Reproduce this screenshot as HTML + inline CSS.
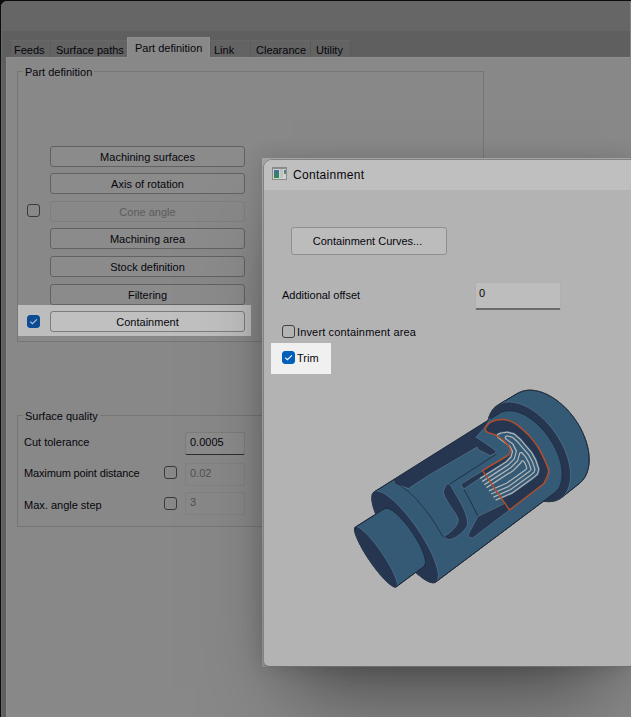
<!DOCTYPE html>
<html><head><meta charset="utf-8">
<style>
*{box-sizing:border-box;margin:0;padding:0}
html,body{width:631px;height:717px;overflow:hidden;background:#0c0c0c;font-family:"Liberation Sans",sans-serif;font-size:11px;color:#06060c}
.a{position:absolute}
.tab{top:40px;height:17px;background:#636363;border:1px solid #676767;border-bottom:none;border-left-color:#5b5b5b;border-right-color:#5b5b5b}
.tab.sel{top:37px;height:21px;background:#888;border-color:#8e8e8e}
.grp{border:1px solid #767676}
.gl{background:#888;padding:0 2px;white-space:nowrap;line-height:12px}
.btn{left:50px;width:195px;height:21px;border:1px solid #626262;border-radius:3px;background:#8b8b8b;text-align:center;line-height:20px;white-space:nowrap}
.cb{width:13px;height:13px;border:1px solid #3a3a3a;border-radius:3px}
.txt{white-space:nowrap;line-height:12px}
</style></head><body>
<!-- main window -->
<div class="a" style="left:1px;top:1px;width:630px;height:716px;background:#5f5f5f;border-top-left-radius:6px;overflow:hidden">
  <div class="a" style="left:0;top:0;width:630px;height:30px;background:#666"></div>
  <div class="a" style="left:0;top:0;width:1px;height:716px;background:#686868"></div>
  <div class="a" style="left:629px;top:0;width:1px;height:56px;background:#858585"></div>
</div>
<div class="a" style="left:6px;top:57px;width:625px;height:660px;background:#888;border-top:1px solid #8e8e8e;border-left:1px solid #8e8e8e"></div>
<!-- tabs -->
<div class="a tab" style="left:10px;width:41px"></div>
<div class="a tab" style="left:50px;width:78px"></div>
<div class="a tab" style="left:210px;width:41px"></div>
<div class="a tab" style="left:250px;width:61px"></div>
<div class="a tab" style="left:310px;width:41px"></div>
<div class="a tab sel" style="left:127px;width:83px"></div>
<div class="a txt" style="left:14px;top:44px">Feeds</div>
<div class="a txt" style="left:56px;top:44px">Surface paths</div>
<div class="a txt" style="left:135px;top:42px">Part definition</div>
<div class="a txt" style="left:214px;top:44px">Link</div>
<div class="a txt" style="left:256px;top:44px">Clearance</div>
<div class="a txt" style="left:316px;top:44px">Utility</div>

<!-- part definition group -->
<div class="a grp" style="left:17px;top:71px;width:467px;height:271px"></div>
<div class="a gl" style="left:23px;top:66px">Part definition</div>

<div class="a" style="left:18px;top:305px;width:233px;height:31px;background:#bdbdbd"></div>

<div class="a btn" style="top:146px">Machining surfaces</div>
<div class="a btn" style="top:173px">Axis of rotation</div>
<div class="a cb" style="left:27px;top:204px"></div>
<div class="a btn" style="top:201px;color:#5c5c5c;border-color:#7e7e7e;background:#888">Cone angle</div>
<div class="a btn" style="top:228px">Machining area</div>
<div class="a btn" style="top:256px">Stock definition</div>
<div class="a btn" style="top:284px">Filtering</div>
<div class="a cb" style="left:27px;top:315px;background:#0c4c94;border-color:#0c4c94"></div>
<svg class="a" style="left:27px;top:315px" width="13" height="13"><path d="M3.2,6.6 L5.4,8.7 L9.9,4.3" fill="none" stroke="#b9c3d2" stroke-width="1.1"/></svg>
<div class="a btn" style="top:311px;background:#c0c0c0;border-color:#7c7c7c">Containment</div>

<!-- surface quality -->
<div class="a grp" style="left:17px;top:415px;width:300px;height:112px"></div>
<div class="a gl" style="left:23px;top:410px">Surface quality</div>
<div class="a txt" style="left:24px;top:436px">Cut tolerance</div>
<div class="a txt" style="left:24px;top:467px;letter-spacing:-0.14px">Maximum point distance</div>
<div class="a txt" style="left:24px;top:499px">Max. angle step</div>
<div class="a" style="left:185px;top:432px;width:60px;height:23px;border:1px solid #7c7c7c;border-bottom:1px solid #2e2e2e;background:#8b8b8b;border-radius:2px"></div>
<div class="a txt" style="left:190px;top:436px">0.0005</div>
<div class="a cb" style="left:164px;top:466px"></div>
<div class="a" style="left:185px;top:463px;width:60px;height:23px;border:1px solid #818181;background:#888;border-radius:2px"></div>
<div class="a txt" style="left:190px;top:467px;color:#505050">0.02</div>
<div class="a cb" style="left:164px;top:497px"></div>
<div class="a" style="left:185px;top:492px;width:60px;height:23px;border:1px solid #818181;background:#888;border-radius:2px"></div>
<div class="a txt" style="left:190px;top:496px;color:#505050">3</div>

<!-- dialog -->
<div class="a" style="left:262px;top:158px;width:369px;height:509px;background:linear-gradient(#a4a4a4,#9a9a9a 40%,#8a8a8a);box-shadow:0 0 20px rgba(0,0,0,0.15),0 50px 80px -30px rgba(0,0,0,0.5)"></div>
<div class="a" style="left:263px;top:159px;width:368px;height:508px;background:#b3b3b3;border:1px solid #828282;border-bottom-color:#6e6e6e;border-right:none;border-top-left-radius:9px;border-bottom-left-radius:6px;overflow:hidden">
  <div class="a" style="left:0;top:0;width:368px;height:30px;background:#bfbfbf"></div>
</div>
<!-- dialog icon -->
<div class="a" style="left:272px;top:167px;width:15px;height:13px;border:1px solid #8a8a8a;border-top-width:2px;background:#d2d2d2"></div>
<div class="a" style="left:274px;top:170px;width:5px;height:8px;background:linear-gradient(#41709e,#2f8c4e)"></div>
<div class="a" style="left:280px;top:169px;width:3px;height:9px;background:#c2c2c2"></div>
<div class="a" style="left:284px;top:170px;width:2px;height:4px;background:linear-gradient(#4a78b0,#5a9a50)"></div>
<div class="a txt" style="left:293px;top:169px;font-size:12px;letter-spacing:0.3px">Containment</div>
<div class="a" style="left:291px;top:227px;width:156px;height:28px;border:1px solid #8f8f8f;border-radius:3px;background:#bcbcbc;text-align:center;line-height:27px;white-space:nowrap;padding-right:3px">Containment Curves...</div>
<div class="a txt" style="left:282px;top:289px">Additional offset</div>
<div class="a" style="left:475px;top:282px;width:86px;height:28px;background:#bdbdbd;border:1px solid #b0b0b0;border-bottom:2px solid #6a6a6a;border-radius:2px"></div>
<div class="a txt" style="left:479px;top:287px">0</div>
<div class="a cb" style="left:282px;top:325px;border-color:#404040"></div>
<div class="a txt" style="left:297px;top:326px;letter-spacing:0.15px">Invert containment area</div>
<div class="a" style="left:271px;top:343px;width:60px;height:31px;background:#f0f0f0"></div>
<div class="a cb" style="left:282px;top:351px;background:#005fb8;border-color:#005fb8"></div>
<svg class="a" style="left:282px;top:351px" width="13" height="13"><path d="M3.2,6.6 L5.4,8.7 L9.9,4.3" fill="none" stroke="#ffffff" stroke-width="1.1"/></svg>
<div class="a txt" style="left:297px;top:352px">Trim</div>
<svg class="a" style="left:0;top:0" width="631" height="717" viewBox="0 0 631 717">
<path d="M579.5,483.4 L561.8,497.4 L561.6,497.6 L561.3,497.7 L561.1,497.9 L560.9,498.1 L560.6,498.2 L560.4,498.4 L560.1,498.5 L559.9,498.7 L559.7,498.8 L559.4,499.0 L559.2,499.1 L558.9,499.2 L558.7,499.4 L558.4,499.5 L558.2,499.6 L557.9,499.7 L557.6,499.9 L557.4,500.0 L557.1,500.1 L556.8,500.2 L556.6,500.3 L556.3,500.4 L556.0,500.5 L555.8,500.6 L555.5,500.6 L555.2,500.7 L554.9,500.8 L554.7,500.9 L554.4,500.9 L554.1,501.0 L553.8,501.1 L553.5,501.1 L553.2,501.2 L552.9,501.2 L552.7,501.3 L552.4,501.3 L552.1,501.4 L551.8,501.4 L551.5,501.4 L551.2,501.5 L550.9,501.5 L550.6,501.5 L550.3,501.5 L550.0,501.6 L549.7,501.6 L549.4,501.6 L549.1,501.6 L548.8,501.6 L548.4,501.6 L548.1,501.6 L547.8,501.6 L547.5,501.6 L547.2,501.5 L546.9,501.5 L546.6,501.5 L546.3,501.5 L545.9,501.4 L545.6,501.4 L545.3,501.4 L545.0,501.3 L544.7,501.3 L544.3,501.2 L544.0,501.2 L543.7,501.1 L543.4,501.1 L543.1,501.0 L542.7,501.0 L542.4,500.9 L542.1,500.8 L541.8,500.8 L541.4,500.7 L541.1,500.6 L540.8,500.5 L540.4,500.4 L540.1,500.3 L539.8,500.2 L539.5,500.2 L539.1,500.1 L538.8,500.0 L538.5,499.8 L538.1,499.7 L537.8,499.6 L537.5,499.5 L537.1,499.4 L536.8,499.3 L536.5,499.1 L536.1,499.0 L535.8,498.9 L535.5,498.8 L535.1,498.6 L534.8,498.5 L534.5,498.3 L534.1,498.2 L533.8,498.0 L533.5,497.9 L533.1,497.7 L532.8,497.6 L532.5,497.4 L532.1,497.3 L531.8,497.1 L531.5,496.9 L531.1,496.8 L530.8,496.6 L530.5,496.4 L530.1,496.2 L529.8,496.1 L529.5,495.9 L529.1,495.7 L528.8,495.5 L528.5,495.3 L528.1,495.1 L527.8,494.9 L527.5,494.7 L527.1,494.5 L526.8,494.3 L526.5,494.1 L526.1,493.9 L525.8,493.7 L525.5,493.4 L525.1,493.2 L524.8,493.0 L524.5,492.8 L524.2,492.6 L523.8,492.3 L523.5,492.1 L523.2,491.9 L522.9,491.6 L522.5,491.4 L522.2,491.1 L521.9,490.9 L521.6,490.7 L521.2,490.4 L520.9,490.2 L520.6,489.9 L520.3,489.7 L519.9,489.4 L519.6,489.1 L519.3,488.9 L519.0,488.6 L518.7,488.4 L518.4,488.1 L518.0,487.8 L517.7,487.5 L517.4,487.3 L517.1,487.0 L516.8,486.7 L516.5,486.4 L516.2,486.2 L515.9,485.9 L515.5,485.6 L515.2,485.3 L514.9,485.0 L514.6,484.7 L514.3,484.4 L514.0,484.1 L513.7,483.8 L513.4,483.5 L513.1,483.2 L512.8,482.9 L512.5,482.6 L512.2,482.3 L511.9,482.0 L511.6,481.7 L511.3,481.4 L511.0,481.1 L510.7,480.7 L510.4,480.4 L510.2,480.1 L509.9,479.8 L509.6,479.5 L509.3,479.1 L509.0,478.8 L508.7,478.5 L508.4,478.2 L508.2,477.8 L507.9,477.5 L507.6,477.2 L507.3,476.8 L507.1,476.5 L506.8,476.2 L506.5,475.8 L506.2,475.5 L506.0,475.1 L505.7,474.8 L505.4,474.5 L505.2,474.1 L504.9,473.8 L504.6,473.4 L504.4,473.1 L504.1,472.7 L503.9,472.4 L503.6,472.0 L503.3,471.7 L503.1,471.3 L502.8,470.9 L502.6,470.6 L502.3,470.2 L502.1,469.9 L501.8,469.5 L501.6,469.1 L501.4,468.8 L501.1,468.4 L500.9,468.0 L500.6,467.7 L500.4,467.3 L500.2,466.9 L499.9,466.6 L499.7,466.2 L499.5,465.8 L499.3,465.5 L499.0,465.1 L498.8,464.7 L498.6,464.3 L498.4,464.0 L498.1,463.6 L497.9,463.2 L497.7,462.8 L497.5,462.4 L497.3,462.1 L497.1,461.7 L496.9,461.3 L496.7,460.9 L496.5,460.5 L496.3,460.2 L496.1,459.8 L495.9,459.4 L495.7,459.0 L495.5,458.6 L495.3,458.2 L495.1,457.9 L494.9,457.5 L494.7,457.1 L494.6,456.7 L494.4,456.3 L494.2,455.9 L494.0,455.5 L493.8,455.1 L493.7,454.8 L493.5,454.4 L493.3,454.0 L493.2,453.6 L493.0,453.2 L492.8,452.8 L492.7,452.4 L492.5,452.0 L492.4,451.6 L492.2,451.2 L492.1,450.9 L491.9,450.5 L491.8,450.1 L491.6,449.7 L491.5,449.3 L491.3,448.9 L491.2,448.5 L491.1,448.1 L490.9,447.7 L490.8,447.3 L490.7,446.9 L490.6,446.5 L490.4,446.2 L490.3,445.8 L490.2,445.4 L490.1,445.0 L490.0,444.6 L489.9,444.2 L489.7,443.8 L489.6,443.4 L489.5,443.0 L489.4,442.7 L489.3,442.3 L489.2,441.9 L489.1,441.5 L489.0,441.1 L489.0,440.7 L488.9,440.3 L488.8,439.9 L488.7,439.6 L488.6,439.2 L488.5,438.8 L488.5,438.4 L488.4,438.0 L488.3,437.6 L488.3,437.3 L488.2,436.9 L488.1,436.5 L488.1,436.1 L488.0,435.7 L488.0,435.4 L487.9,435.0 L487.9,434.6 L487.8,434.2 L487.8,433.9 L487.7,433.5 L487.7,433.1 L487.7,432.8 L487.6,432.4 L487.6,432.0 L487.6,431.6 L487.5,431.3 L487.5,430.9 L487.5,430.5 L487.5,430.2 L487.5,429.8 L487.5,429.5 L487.5,429.1 L487.4,428.7 L487.4,428.4 L487.4,428.0 L487.4,427.7 L487.4,427.3 L487.5,427.0 L487.5,426.6 L487.5,426.3 L487.5,425.9 L487.5,425.6 L487.5,425.2 L487.6,424.9 L487.6,424.5 L487.6,424.2 L487.7,423.9 L487.7,423.5 L487.7,423.2 L487.8,422.8 L487.8,422.5 L487.9,422.2 L487.9,421.9 L488.0,421.5 L488.0,421.2 L488.1,420.9 L488.1,420.6 L488.2,420.2 L488.3,419.9 L488.3,419.6 L488.4,419.3 L488.5,419.0 L488.6,418.7 L488.6,418.4 L488.7,418.0 L488.8,417.7 L488.9,417.4 L489.0,417.1 L489.1,416.8 L489.2,416.5 L489.3,416.3 L489.4,416.0 L489.5,415.7 L489.6,415.4 L489.7,415.1 L489.8,414.8 L490.0,414.5 L490.1,414.3 L490.2,414.0 L490.3,413.7 L490.5,413.4 L490.6,413.2 L490.7,412.9 L490.9,412.6 L491.0,412.4 L491.2,412.1 L491.3,411.9 L491.5,411.6 L491.6,411.4 L491.8,411.1 L491.9,410.9 L492.1,410.6 L492.3,410.4 L492.4,410.2 L492.6,409.9 L492.8,409.7 L492.9,409.5 L493.1,409.3 L493.3,409.0 L493.5,408.8 L493.7,408.6 L493.9,408.4 L494.1,408.2 L494.3,408.0 L494.5,407.8 L494.7,407.6 L494.9,407.4 L495.1,407.2 L495.3,407.0 L495.5,406.8 L495.7,406.6 L495.9,406.4 L496.2,406.3 L496.4,406.1 L496.6,405.9 L496.8,405.7 L497.1,405.6 L497.3,405.4 L497.5,405.3 L497.8,405.1 L498.0,405.0 L498.3,404.8 L517.6,393.3 L517.9,393.2 L518.2,393.0 L518.4,392.9 L518.7,392.8 L519.0,392.6 L519.2,392.5 L519.5,392.4 L519.8,392.2 L520.1,392.1 L520.4,392.0 L520.6,391.9 L520.9,391.8 L521.2,391.7 L521.5,391.6 L521.8,391.5 L522.1,391.4 L522.4,391.3 L522.7,391.2 L523.0,391.1 L523.3,391.0 L523.6,390.9 L523.9,390.9 L524.2,390.8 L524.6,390.7 L524.9,390.7 L525.2,390.6 L525.5,390.5 L525.8,390.5 L526.2,390.4 L526.5,390.4 L526.8,390.4 L527.2,390.3 L527.5,390.3 L527.8,390.3 L528.2,390.2 L528.5,390.2 L528.8,390.2 L529.2,390.2 L529.5,390.2 L529.9,390.2 L530.2,390.2 L530.6,390.2 L530.9,390.2 L531.3,390.2 L531.6,390.2 L532.0,390.3 L532.4,390.3 L532.7,390.3 L533.1,390.4 L533.4,390.4 L533.8,390.4 L534.2,390.5 L534.5,390.5 L534.9,390.6 L535.3,390.7 L535.6,390.7 L536.0,390.8 L536.4,390.9 L536.8,390.9 L537.1,391.0 L537.5,391.1 L537.9,391.2 L538.3,391.3 L538.7,391.4 L539.0,391.5 L539.4,391.6 L539.8,391.7 L540.2,391.8 L540.6,391.9 L541.0,392.1 L541.4,392.2 L541.8,392.3 L542.1,392.5 L542.5,392.6 L542.9,392.7 L543.3,392.9 L543.7,393.1 L544.1,393.2 L544.5,393.4 L544.9,393.5 L545.3,393.7 L545.7,393.9 L546.1,394.1 L546.5,394.2 L546.9,394.4 L547.3,394.6 L547.7,394.8 L548.1,395.0 L548.5,395.2 L548.9,395.4 L549.3,395.6 L549.7,395.9 L550.1,396.1 L550.5,396.3 L550.9,396.5 L551.2,396.8 L551.6,397.0 L552.0,397.2 L552.4,397.5 L552.8,397.7 L553.2,398.0 L553.6,398.2 L554.0,398.5 L554.4,398.8 L554.8,399.0 L555.2,399.3 L555.6,399.6 L556.0,399.9 L556.4,400.1 L556.8,400.4 L557.2,400.7 L557.6,401.0 L558.0,401.3 L558.4,401.6 L558.7,401.9 L559.1,402.2 L559.5,402.5 L559.9,402.9 L560.3,403.2 L560.7,403.5 L561.1,403.8 L561.4,404.2 L561.8,404.5 L562.2,404.8 L562.6,405.2 L562.9,405.5 L563.3,405.9 L563.7,406.2 L564.1,406.6 L564.4,406.9 L564.8,407.3 L565.2,407.6 L565.5,408.0 L565.9,408.4 L566.3,408.7 L566.6,409.1 L567.0,409.5 L567.4,409.9 L567.7,410.3 L568.1,410.6 L568.4,411.0 L568.8,411.4 L569.1,411.8 L569.5,412.2 L569.8,412.6 L570.2,413.0 L570.5,413.4 L570.8,413.8 L571.2,414.2 L571.5,414.6 L571.8,415.1 L572.2,415.5 L572.5,415.9 L572.8,416.3 L573.1,416.7 L573.5,417.2 L573.8,417.6 L574.1,418.0 L574.4,418.5 L574.7,418.9 L575.0,419.3 L575.3,419.8 L575.6,420.2 L575.9,420.6 L576.2,421.1 L576.5,421.5 L576.8,422.0 L577.1,422.4 L577.4,422.9 L577.7,423.3 L577.9,423.8 L578.2,424.2 L578.5,424.7 L578.8,425.2 L579.0,425.6 L579.3,426.1 L579.6,426.5 L579.8,427.0 L580.1,427.5 L580.3,427.9 L580.6,428.4 L580.8,428.9 L581.1,429.3 L581.3,429.8 L581.5,430.3 L581.8,430.7 L582.0,431.2 L582.2,431.7 L582.4,432.1 L582.7,432.6 L582.9,433.1 L583.1,433.6 L583.3,434.0 L583.5,434.5 L583.7,435.0 L583.9,435.4 L584.1,435.9 L584.3,436.4 L584.5,436.9 L584.7,437.3 L584.9,437.8 L585.0,438.3 L585.2,438.8 L585.4,439.2 L585.5,439.7 L585.7,440.2 L585.9,440.7 L586.0,441.1 L586.2,441.6 L586.3,442.1 L586.5,442.6 L586.6,443.0 L586.7,443.5 L586.9,444.0 L587.0,444.4 L587.1,444.9 L587.3,445.4 L587.4,445.8 L587.5,446.3 L587.6,446.8 L587.7,447.2 L587.8,447.7 L587.9,448.2 L588.0,448.6 L588.1,449.1 L588.2,449.5 L588.3,450.0 L588.4,450.5 L588.4,450.9 L588.5,451.4 L588.6,451.8 L588.6,452.3 L588.7,452.7 L588.8,453.2 L588.8,453.6 L588.9,454.1 L588.9,454.5 L589.0,455.0 L589.0,455.4 L589.0,455.8 L589.1,456.3 L589.1,456.7 L589.1,457.1 L589.1,457.6 L589.1,458.0 L589.2,458.4 L589.2,458.8 L589.2,459.3 L589.2,459.7 L589.2,460.1 L589.2,460.5 L589.2,460.9 L589.1,461.4 L589.1,461.8 L589.1,462.2 L589.1,462.6 L589.1,463.0 L589.0,463.4 L589.0,463.8 L588.9,464.2 L588.9,464.6 L588.9,465.0 L588.8,465.3 L588.8,465.7 L588.7,466.1 L588.6,466.5 L588.6,466.9 L588.5,467.2 L588.4,467.6 L588.4,468.0 L588.3,468.4 L588.2,468.7 L588.1,469.1 L588.0,469.4 L587.9,469.8 L587.8,470.1 L587.7,470.5 L587.6,470.8 L587.5,471.2 L587.4,471.5 L587.3,471.9 L587.2,472.2 L587.1,472.5 L587.0,472.9 L586.8,473.2 L586.7,473.5 L586.6,473.8 L586.4,474.1 L586.3,474.4 L586.2,474.8 L586.0,475.1 L585.9,475.4 L585.7,475.7 L585.6,476.0 L585.4,476.2 L585.3,476.5 L585.1,476.8 L584.9,477.1 L584.8,477.4 L584.6,477.7 L584.4,477.9 L584.2,478.2 L584.1,478.5 L583.9,478.7 L583.7,479.0 L583.5,479.2 L583.3,479.5 L583.1,479.7 L582.9,480.0 L582.7,480.2 L582.5,480.5 L582.3,480.7 L582.1,480.9 L581.9,481.2 L581.7,481.4 L581.5,481.6 L581.3,481.8 L581.1,482.0 L580.8,482.2 L580.6,482.4 L580.4,482.6 L580.2,482.8 L579.9,483.0 L579.7,483.2Z" fill="#345a76" stroke="#1c2636" stroke-width="0.8" stroke-linejoin="round"/>
<path d="M569.1,463.3 L569.2,463.7 L569.3,464.2 L569.4,464.7 L569.5,465.1 L569.6,465.6 L569.7,466.0 L569.8,466.5 L569.8,466.9 L569.9,467.4 L570.0,467.8 L570.0,468.3 L570.1,468.7 L570.1,469.2 L570.2,469.6 L570.2,470.1 L570.3,470.5 L570.3,471.0 L570.4,471.4 L570.4,471.8 L570.4,472.3 L570.5,472.7 L570.5,473.1 L570.5,473.5 L570.5,474.0 L570.5,474.4 L570.5,474.8 L570.5,475.2 L570.5,475.6 L570.5,476.0 L570.5,476.4 L570.5,476.9 L570.5,477.3 L570.5,477.7 L570.5,478.1 L570.4,478.5 L570.4,478.8 L570.4,479.2 L570.3,479.6 L570.3,480.0 L570.3,480.4 L570.2,480.8 L570.2,481.1 L570.1,481.5 L570.1,481.9 L570.0,482.3 L569.9,482.6 L569.9,483.0 L569.8,483.3 L569.7,483.7 L569.6,484.1 L569.6,484.4 L569.5,484.8 L569.4,485.1 L569.3,485.4 L569.2,485.8 L569.1,486.1 L569.0,486.4 L568.9,486.8 L568.8,487.1 L568.7,487.4 L568.6,487.7 L568.4,488.0 L568.3,488.4 L568.2,488.7 L568.1,489.0 L567.9,489.3 L567.8,489.6 L567.7,489.9 L567.5,490.1 L567.4,490.4 L567.2,490.7 L567.1,491.0 L566.9,491.3 L566.8,491.5 L566.6,491.8 L566.5,492.1 L566.3,492.3 L566.1,492.6 L566.0,492.9 L565.8,493.1 L565.6,493.4 L565.4,493.6 L565.3,493.8 L565.1,494.1 L564.9,494.3 L564.7,494.6 L564.5,494.8 L564.3,495.0 L564.1,495.2 L563.9,495.4 L563.7,495.6 L563.5,495.9 L563.3,496.1 L563.1,496.3 L562.9,496.5 L562.7,496.7 L562.4,496.8 L562.2,497.0 L562.0,497.2 L561.8,497.4 L561.6,497.6 L561.3,497.7 L561.1,497.9 L560.9,498.1 L560.6,498.2 L560.4,498.4 L560.1,498.5 L559.9,498.7 L559.7,498.8 L559.4,499.0 L559.2,499.1 L558.9,499.2 L558.7,499.4 L558.4,499.5 L558.2,499.6 L557.9,499.7 L557.6,499.9 L557.4,500.0 L557.1,500.1 L556.8,500.2 L556.6,500.3 L556.3,500.4 L556.0,500.5 L555.8,500.6 L555.5,500.6 L555.2,500.7 L554.9,500.8 L554.7,500.9 L554.4,500.9 L554.1,501.0 L553.8,501.1 L553.5,501.1 L553.2,501.2 L552.9,501.2 L552.7,501.3 L552.4,501.3 L552.1,501.4 L551.8,501.4 L551.5,501.4 L551.2,501.5 L550.9,501.5 L550.6,501.5 L550.3,501.5 L550.0,501.6 L549.7,501.6 L549.4,501.6 L549.1,501.6 L548.8,501.6 L548.4,501.6 L548.1,501.6 L547.8,501.6 L547.5,501.6 L547.2,501.5 L546.9,501.5 L546.6,501.5 L546.3,501.5 L545.9,501.4 L545.6,501.4 L545.3,501.4 L545.0,501.3 L544.7,501.3 L544.3,501.2 L544.0,501.2 L543.7,501.1 L543.4,501.1 L543.1,501.0 L542.7,501.0 L542.4,500.9 L542.1,500.8 L541.8,500.8 L541.4,500.7 L541.1,500.6 L540.8,500.5 L540.4,500.4 L540.1,500.3 L539.8,500.2 L539.5,500.2 L539.1,500.1 L538.8,500.0 L538.5,499.8 L538.1,499.7 L537.8,499.6 L537.5,499.5 L537.1,499.4 L536.8,499.3 L536.5,499.1 L536.1,499.0 L535.8,498.9 L535.5,498.8 L535.1,498.6 L534.8,498.5 L534.5,498.3 L534.1,498.2 L533.8,498.0 L533.5,497.9 L533.1,497.7 L532.8,497.6 L532.5,497.4 L532.1,497.3 L531.8,497.1 L531.5,496.9 L531.1,496.8 L530.8,496.6 L530.5,496.4 L530.1,496.2 L529.8,496.1 L529.5,495.9 L529.1,495.7 L528.8,495.5 L528.5,495.3 L528.1,495.1 L527.8,494.9 L527.5,494.7 L527.1,494.5 L526.8,494.3 L526.5,494.1 L526.1,493.9 L525.8,493.7 L525.5,493.4 L525.1,493.2 L524.8,493.0 L524.5,492.8 L524.2,492.6 L523.8,492.3 L523.5,492.1 L523.2,491.9 L522.9,491.6 L522.5,491.4 L522.2,491.1 L521.9,490.9 L521.6,490.7 L521.2,490.4 L520.9,490.2 L520.6,489.9 L520.3,489.7 L519.9,489.4 L519.6,489.1 L519.3,488.9 L519.0,488.6 L518.7,488.4 L518.4,488.1 L518.0,487.8 L517.7,487.5 L517.4,487.3 L517.1,487.0 L516.8,486.7 L516.5,486.4 L516.2,486.2 L515.9,485.9 L515.5,485.6 L515.2,485.3 L514.9,485.0 L514.6,484.7 L514.3,484.4 L514.0,484.1 L513.7,483.8 L513.4,483.5 L513.1,483.2 L512.8,482.9 L512.5,482.6 L512.2,482.3 L511.9,482.0 L511.6,481.7 L511.3,481.4 L511.0,481.1 L510.7,480.7 L510.4,480.4 L510.2,480.1 L509.9,479.8 L509.6,479.5 L509.3,479.1 L509.0,478.8 L508.7,478.5 L508.4,478.2 L508.2,477.8 L507.9,477.5 L507.6,477.2 L507.3,476.8 L507.1,476.5 L506.8,476.2 L506.5,475.8 L506.2,475.5 L506.0,475.1 L505.7,474.8 L505.4,474.5 L505.2,474.1 L504.9,473.8 L504.6,473.4 L504.4,473.1 L504.1,472.7 L503.9,472.4 L503.6,472.0 L503.3,471.7 L503.1,471.3 L502.8,470.9 L502.6,470.6 L502.3,470.2 L502.1,469.9 L501.8,469.5 L501.6,469.1 L501.4,468.8 L501.1,468.4 L500.9,468.0 L500.6,467.7 L500.4,467.3 L500.2,466.9 L499.9,466.6 L499.7,466.2 L499.5,465.8 L499.3,465.5 L499.0,465.1 L498.8,464.7 L498.6,464.3 L498.4,464.0 L498.1,463.6 L497.9,463.2 L497.7,462.8 L497.5,462.4 L497.3,462.1 L497.1,461.7 L496.9,461.3 L496.7,460.9 L496.5,460.5 L496.3,460.2 L496.1,459.8 L495.9,459.4 L495.7,459.0 L495.5,458.6 L495.3,458.2 L495.1,457.9 L494.9,457.5 L494.7,457.1 L494.6,456.7 L494.4,456.3 L494.2,455.9 L494.0,455.5 L493.8,455.1 L493.7,454.8 L493.5,454.4 L493.3,454.0 L493.2,453.6 L493.0,453.2 L492.8,452.8 L492.7,452.4 L492.5,452.0 L492.4,451.6 L492.2,451.2 L492.1,450.9 L491.9,450.5 L491.8,450.1 L491.6,449.7 L491.5,449.3 L491.3,448.9 L491.2,448.5 L491.1,448.1 L490.9,447.7 L490.8,447.3 L490.7,446.9 L490.6,446.5 L490.4,446.2 L490.3,445.8 L490.2,445.4 L490.1,445.0 L490.0,444.6 L489.9,444.2 L489.7,443.8 L489.6,443.4 L489.5,443.0 L489.4,442.7 L489.3,442.3 L489.2,441.9 L489.1,441.5 L489.0,441.1 L489.0,440.7 L488.9,440.3 L488.8,439.9 L488.7,439.6 L488.6,439.2 L488.5,438.8 L488.5,438.4 L488.4,438.0 L488.3,437.6 L488.3,437.3 L488.2,436.9 L488.1,436.5 L488.1,436.1 L488.0,435.7 L488.0,435.4 L487.9,435.0 L487.9,434.6 L487.8,434.2 L487.8,433.9 L487.7,433.5 L487.7,433.1 L487.7,432.8 L487.6,432.4 L487.6,432.0 L487.6,431.6 L487.5,431.3 L487.5,430.9 L487.5,430.5 L487.5,430.2 L487.5,429.8 L487.5,429.5 L487.5,429.1 L487.4,428.7 L487.4,428.4 L487.4,428.0 L487.4,427.7 L487.4,427.3 L487.5,427.0 L487.5,426.6 L487.5,426.3 L487.5,425.9 L487.5,425.6 L487.5,425.2 L487.6,424.9 L487.6,424.5 L487.6,424.2 L487.7,423.9 L487.7,423.5 L487.7,423.2 L487.8,422.8 L487.8,422.5 L487.9,422.2 L487.9,421.9 L488.0,421.5 L488.0,421.2 L488.1,420.9 L488.1,420.6 L488.2,420.2 L488.3,419.9 L488.3,419.6 L488.4,419.3 L488.5,419.0 L488.6,418.7 L488.6,418.4 L488.7,418.0 L488.8,417.7 L488.9,417.4 L489.0,417.1 L489.1,416.8 L489.2,416.5 L489.3,416.3 L489.4,416.0 L489.5,415.7 L489.6,415.4 L489.7,415.1 L489.8,414.8 L490.0,414.5 L490.1,414.3 L490.2,414.0 L490.3,413.7 L490.5,413.4 L490.6,413.2 L490.7,412.9 L490.9,412.6 L491.0,412.4 L491.2,412.1 L491.3,411.9 L491.5,411.6 L491.6,411.4 L491.8,411.1 L491.9,410.9 L492.1,410.6 L492.3,410.4 L492.4,410.2 L492.6,409.9 L492.8,409.7 L492.9,409.5 L493.1,409.3 L493.3,409.0 L493.5,408.8 L493.7,408.6 L493.9,408.4 L494.1,408.2 L494.3,408.0 L494.5,407.8 L494.7,407.6 L494.9,407.4 L495.1,407.2 L495.3,407.0 L495.5,406.8 L495.7,406.6 L495.9,406.4 L496.2,406.3 L496.4,406.1 L496.6,405.9 L496.8,405.7 L497.1,405.6 L497.3,405.4 L497.5,405.3 L497.8,405.1 L498.0,405.0 L498.3,404.8 L498.5,404.7 L498.8,404.5 L499.0,404.4 L499.3,404.3 L499.5,404.1 L499.8,404.0 L500.1,403.9 L500.3,403.8 L500.6,403.7 L500.9,403.5 L501.1,403.4 L501.4,403.3 L501.7,403.2 L502.0,403.1 L502.3,403.0 L502.5,403.0 L502.8,402.9 L503.1,402.8 L503.4,402.7 L503.7,402.6 L504.0,402.6 L504.3,402.5 L504.6,402.4 L504.9,402.4 L505.2,402.3 L505.5,402.3 L505.8,402.2 L506.2,402.2 L506.5,402.2 L506.8,402.1 L507.1,402.1 L507.4,402.1 L507.8,402.1 L508.1,402.0 L508.4,402.0 L508.7,402.0 L509.1,402.0 L509.4,402.0 L509.7,402.0 L510.1,402.0 L510.4,402.0 L510.8,402.1 L511.1,402.1 L511.5,402.1 L511.8,402.1 L512.2,402.2 L512.5,402.2 L512.9,402.2 L513.2,402.3 L513.6,402.3 L513.9,402.4 L514.3,402.5 L514.6,402.5 L515.0,402.6 L515.4,402.7 L515.7,402.7 L516.1,402.8 L516.5,402.9 L516.8,403.0 L517.2,403.1 L517.6,403.2 L518.0,403.3 L518.3,403.4 L518.7,403.5 L519.1,403.6 L519.5,403.7 L519.8,403.9 L520.2,404.0 L520.6,404.1 L521.0,404.3 L521.4,404.4 L521.8,404.6 L522.2,404.7 L522.5,404.9 L522.9,405.0 L523.3,405.2 L523.7,405.3 L524.1,405.5 L524.5,405.7 L524.9,405.9 L525.3,406.1 L525.7,406.2 L526.1,406.4 L526.5,406.6 L526.8,406.8 L527.2,407.0 L527.6,407.3 L528.0,407.5 L528.4,407.7 L528.8,407.9 L529.2,408.1 L529.6,408.4 L530.0,408.6 L530.4,408.8 L530.8,409.1 L531.2,409.3 L531.6,409.6 L532.0,409.8 L532.4,410.1 L532.8,410.4 L533.2,410.6 L533.6,410.9 L534.0,411.2 L534.4,411.4 L534.8,411.7 L535.2,412.0 L535.6,412.3 L536.0,412.6 L536.4,412.9 L536.8,413.2 L537.2,413.5 L537.6,413.8 L537.9,414.1 L538.3,414.4 L538.7,414.8 L539.1,415.1 L539.5,415.4 L539.9,415.7 L540.3,416.1 L540.7,416.4 L541.1,416.8 L541.4,417.1 L541.8,417.5 L542.2,417.8 L542.6,418.2 L543.0,418.5 L543.4,418.9 L543.7,419.2 L544.1,419.6 L544.5,420.0 L544.9,420.4 L545.2,420.7 L545.6,421.1 L546.0,421.5 L546.3,421.9 L546.7,422.3 L547.1,422.7 L547.4,423.1 L547.8,423.5 L548.2,423.9 L548.5,424.3 L548.9,424.7 L549.2,425.1 L549.6,425.5 L549.9,425.9 L550.3,426.3 L550.6,426.7 L551.0,427.2 L551.3,427.6 L551.7,428.0 L552.0,428.4 L552.3,428.9 L552.7,429.3 L553.0,429.7 L553.3,430.2 L553.7,430.6 L554.0,431.1 L554.3,431.5 L554.6,432.0 L555.0,432.4 L555.3,432.9 L555.6,433.3 L555.9,433.8 L556.2,434.2 L556.5,434.7 L556.8,435.1 L557.1,435.6 L557.4,436.1 L557.7,436.5 L558.0,437.0 L558.3,437.4 L558.6,437.9 L558.9,438.4 L559.2,438.9 L559.4,439.3 L559.7,439.8 L560.0,440.3 L560.2,440.7 L560.5,441.2 L560.8,441.7 L561.0,442.2 L561.3,442.6 L561.5,443.1 L561.8,443.6 L562.0,444.1 L562.3,444.6 L562.5,445.0 L562.8,445.5 L563.0,446.0 L563.2,446.5 L563.5,447.0 L563.7,447.5 L563.9,447.9 L564.1,448.4 L564.3,448.9 L564.6,449.4 L564.8,449.9 L565.0,450.4 L565.2,450.8 L565.4,451.3 L565.6,451.8 L565.7,452.3 L565.9,452.8 L566.1,453.3 L566.3,453.8 L566.5,454.2 L566.6,454.7 L566.8,455.2 L567.0,455.7 L567.1,456.2 L567.3,456.6 L567.5,457.1 L567.6,457.6 L567.7,458.1 L567.9,458.6 L568.0,459.0 L568.2,459.5 L568.3,460.0 L568.4,460.5 L568.6,460.9 L568.7,461.4 L568.8,461.9 L568.9,462.3 L569.0,462.8Z" fill="#263650" stroke="#6a8498" stroke-width="0.6" stroke-linejoin="round"/>
<path d="M554.4,493.1 L436.1,581.8 L436.0,581.9 L435.9,582.0 L435.8,582.0 L435.6,582.1 L435.5,582.2 L435.4,582.2 L435.3,582.3 L435.2,582.3 L435.1,582.4 L434.9,582.4 L434.8,582.5 L434.7,582.5 L434.5,582.5 L434.4,582.6 L434.3,582.6 L434.1,582.6 L434.0,582.6 L433.9,582.7 L433.7,582.7 L433.6,582.7 L433.4,582.7 L433.3,582.7 L433.1,582.7 L433.0,582.7 L432.8,582.7 L432.7,582.7 L432.5,582.7 L432.3,582.6 L432.2,582.6 L432.0,582.6 L431.8,582.6 L431.7,582.6 L431.5,582.5 L431.3,582.5 L431.2,582.4 L431.0,582.4 L430.8,582.4 L430.6,582.3 L430.4,582.3 L430.3,582.2 L430.1,582.1 L429.9,582.1 L429.7,582.0 L429.5,581.9 L429.3,581.9 L429.1,581.8 L428.9,581.7 L428.8,581.6 L428.6,581.6 L428.4,581.5 L428.2,581.4 L428.0,581.3 L427.8,581.2 L427.6,581.1 L427.4,581.0 L427.1,580.9 L426.9,580.8 L426.7,580.7 L426.5,580.5 L426.3,580.4 L426.1,580.3 L425.9,580.2 L425.7,580.1 L425.5,579.9 L425.2,579.8 L425.0,579.7 L424.8,579.5 L424.6,579.4 L424.4,579.3 L424.1,579.1 L423.9,579.0 L423.7,578.8 L423.5,578.7 L423.2,578.5 L423.0,578.3 L422.8,578.2 L422.5,578.0 L422.3,577.8 L422.1,577.7 L421.8,577.5 L421.6,577.3 L421.4,577.2 L421.1,577.0 L420.9,576.8 L420.7,576.6 L420.4,576.4 L420.2,576.2 L419.9,576.0 L419.7,575.8 L419.4,575.6 L419.2,575.4 L419.0,575.2 L418.7,575.0 L418.5,574.8 L418.2,574.6 L418.0,574.4 L417.7,574.2 L417.5,574.0 L417.2,573.8 L417.0,573.5 L416.7,573.3 L416.5,573.1 L416.2,572.9 L416.0,572.6 L415.7,572.4 L415.5,572.2 L415.2,571.9 L415.0,571.7 L414.7,571.5 L414.5,571.2 L414.2,571.0 L413.9,570.7 L413.7,570.5 L413.4,570.2 L413.2,570.0 L412.9,569.7 L412.7,569.5 L412.4,569.2 L412.1,569.0 L411.9,568.7 L411.6,568.4 L411.4,568.2 L411.1,567.9 L410.9,567.6 L410.6,567.4 L410.3,567.1 L410.1,566.8 L409.8,566.5 L409.6,566.3 L409.3,566.0 L409.0,565.7 L408.8,565.4 L408.5,565.1 L408.2,564.8 L408.0,564.5 L407.7,564.3 L407.5,564.0 L407.2,563.7 L406.9,563.4 L406.7,563.1 L406.4,562.8 L406.2,562.5 L405.9,562.2 L405.6,561.9 L405.4,561.6 L405.1,561.3 L404.8,561.0 L404.6,560.7 L404.3,560.4 L404.1,560.0 L403.8,559.7 L403.5,559.4 L403.3,559.1 L403.0,558.8 L402.8,558.5 L402.5,558.2 L402.2,557.8 L402.0,557.5 L401.7,557.2 L401.5,556.9 L401.2,556.6 L400.9,556.2 L400.7,555.9 L400.4,555.6 L400.2,555.2 L399.9,554.9 L399.7,554.6 L399.4,554.3 L399.1,553.9 L398.9,553.6 L398.6,553.3 L398.4,552.9 L398.1,552.6 L397.9,552.3 L397.6,551.9 L397.4,551.6 L397.1,551.2 L396.9,550.9 L396.6,550.6 L396.4,550.2 L396.1,549.9 L395.9,549.5 L395.6,549.2 L395.4,548.8 L395.1,548.5 L394.9,548.1 L394.6,547.8 L394.4,547.5 L394.1,547.1 L393.9,546.8 L393.7,546.4 L393.4,546.1 L393.2,545.7 L392.9,545.4 L392.7,545.0 L392.4,544.6 L392.2,544.3 L392.0,543.9 L391.7,543.6 L391.5,543.2 L391.3,542.9 L391.0,542.5 L390.8,542.2 L390.6,541.8 L390.3,541.5 L390.1,541.1 L389.9,540.8 L389.6,540.4 L389.4,540.0 L389.2,539.7 L388.9,539.3 L388.7,539.0 L388.5,538.6 L388.3,538.3 L388.0,537.9 L387.8,537.5 L387.6,537.2 L387.4,536.8 L387.2,536.5 L386.9,536.1 L386.7,535.7 L386.5,535.4 L386.3,535.0 L386.1,534.7 L385.9,534.3 L385.7,534.0 L385.5,533.6 L385.2,533.2 L385.0,532.9 L384.8,532.5 L384.6,532.2 L384.4,531.8 L384.2,531.5 L384.0,531.1 L383.8,530.7 L383.6,530.4 L383.4,530.0 L383.2,529.7 L383.0,529.3 L382.8,529.0 L382.6,528.6 L382.4,528.3 L382.3,527.9 L382.1,527.5 L381.9,527.2 L381.7,526.8 L381.5,526.5 L381.3,526.1 L381.1,525.8 L381.0,525.4 L380.8,525.1 L380.6,524.7 L380.4,524.4 L380.2,524.0 L380.1,523.7 L379.9,523.3 L379.7,523.0 L379.6,522.7 L379.4,522.3 L379.2,522.0 L379.1,521.6 L378.9,521.3 L378.7,520.9 L378.6,520.6 L378.4,520.3 L378.3,519.9 L378.1,519.6 L378.0,519.2 L377.8,518.9 L377.7,518.6 L377.5,518.2 L377.4,517.9 L377.2,517.6 L377.1,517.2 L376.9,516.9 L376.8,516.6 L376.7,516.3 L376.5,515.9 L376.4,515.6 L376.3,515.3 L376.1,515.0 L376.0,514.6 L375.9,514.3 L375.7,514.0 L375.6,513.7 L375.5,513.4 L375.4,513.1 L375.3,512.7 L375.1,512.4 L375.0,512.1 L374.9,511.8 L374.8,511.5 L374.7,511.2 L374.6,510.9 L374.5,510.6 L374.4,510.3 L374.3,510.0 L374.2,509.7 L374.1,509.4 L374.0,509.1 L373.9,508.8 L373.8,508.5 L373.7,508.2 L373.6,507.9 L373.5,507.6 L373.4,507.3 L373.4,507.1 L373.3,506.8 L373.2,506.5 L373.1,506.2 L373.1,505.9 L373.0,505.7 L372.9,505.4 L372.9,505.1 L372.8,504.8 L372.7,504.6 L372.7,504.3 L372.6,504.1 L372.6,503.8 L372.5,503.5 L372.4,503.3 L372.4,503.0 L372.4,502.8 L372.3,502.5 L372.3,502.3 L372.2,502.0 L372.2,501.8 L372.1,501.5 L372.1,501.3 L372.1,501.1 L372.1,500.8 L372.0,500.6 L372.0,500.4 L372.0,500.1 L372.0,499.9 L371.9,499.7 L371.9,499.4 L371.9,499.2 L371.9,499.0 L371.9,498.8 L371.9,498.6 L371.9,498.4 L371.9,498.2 L371.9,498.0 L371.9,497.8 L371.9,497.6 L371.9,497.4 L371.9,497.2 L371.9,497.0 L371.9,496.8 L371.9,496.6 L372.0,496.4 L372.0,496.2 L372.0,496.1 L372.0,495.9 L372.1,495.7 L372.1,495.6 L372.1,495.4 L372.2,495.2 L372.2,495.1 L372.3,494.9 L372.3,494.8 L372.3,494.6 L372.4,494.5 L372.4,494.3 L372.5,494.2 L372.6,494.0 L372.6,493.9 L372.7,493.8 L372.7,493.6 L372.8,493.5 L372.9,493.4 L372.9,493.3 L373.0,493.1 L373.1,493.0 L373.2,492.9 L373.2,492.8 L373.3,492.7 L373.4,492.6 L373.5,492.5 L373.6,492.4 L373.7,492.3 L373.8,492.2 L373.9,492.1 L374.0,492.1 L374.1,492.0 L374.2,491.9 L374.3,491.8 L499.4,413.3 L499.7,413.2 L499.9,413.1 L500.1,413.0 L500.3,412.8 L500.5,412.7 L500.7,412.6 L500.9,412.5 L501.2,412.4 L501.4,412.3 L501.6,412.2 L501.8,412.1 L502.1,412.0 L502.3,411.9 L502.5,411.8 L502.8,411.7 L503.0,411.6 L503.3,411.6 L503.5,411.5 L503.7,411.4 L504.0,411.3 L504.2,411.3 L504.5,411.2 L504.7,411.2 L505.0,411.1 L505.3,411.0 L505.5,411.0 L505.8,411.0 L506.0,410.9 L506.3,410.9 L506.6,410.8 L506.8,410.8 L507.1,410.8 L507.4,410.8 L507.7,410.7 L507.9,410.7 L508.2,410.7 L508.5,410.7 L508.8,410.7 L509.0,410.7 L509.3,410.7 L509.6,410.7 L509.9,410.7 L510.2,410.7 L510.5,410.7 L510.8,410.7 L511.1,410.8 L511.4,410.8 L511.7,410.8 L512.0,410.8 L512.3,410.9 L512.6,410.9 L512.9,411.0 L513.2,411.0 L513.5,411.1 L513.8,411.1 L514.1,411.2 L514.4,411.2 L514.7,411.3 L515.0,411.4 L515.3,411.4 L515.6,411.5 L516.0,411.6 L516.3,411.7 L516.6,411.8 L516.9,411.8 L517.2,411.9 L517.5,412.0 L517.9,412.1 L518.2,412.2 L518.5,412.4 L518.8,412.5 L519.2,412.6 L519.5,412.7 L519.8,412.8 L520.1,412.9 L520.5,413.1 L520.8,413.2 L521.1,413.3 L521.5,413.5 L521.8,413.6 L522.1,413.8 L522.4,413.9 L522.8,414.1 L523.1,414.2 L523.4,414.4 L523.8,414.6 L524.1,414.7 L524.5,414.9 L524.8,415.1 L525.1,415.3 L525.5,415.5 L525.8,415.6 L526.1,415.8 L526.5,416.0 L526.8,416.2 L527.1,416.4 L527.5,416.6 L527.8,416.8 L528.2,417.1 L528.5,417.3 L528.8,417.5 L529.2,417.7 L529.5,417.9 L529.8,418.2 L530.2,418.4 L530.5,418.6 L530.8,418.9 L531.2,419.1 L531.5,419.3 L531.9,419.6 L532.2,419.8 L532.5,420.1 L532.9,420.4 L533.2,420.6 L533.5,420.9 L533.9,421.1 L534.2,421.4 L534.5,421.7 L534.9,422.0 L535.2,422.2 L535.5,422.5 L535.8,422.8 L536.2,423.1 L536.5,423.4 L536.8,423.7 L537.2,424.0 L537.5,424.3 L537.8,424.6 L538.1,424.9 L538.5,425.2 L538.8,425.5 L539.1,425.8 L539.4,426.1 L539.7,426.4 L540.1,426.7 L540.4,427.1 L540.7,427.4 L541.0,427.7 L541.3,428.1 L541.6,428.4 L541.9,428.7 L542.2,429.1 L542.5,429.4 L542.8,429.7 L543.2,430.1 L543.5,430.4 L543.8,430.8 L544.1,431.1 L544.4,431.5 L544.6,431.8 L544.9,432.2 L545.2,432.6 L545.5,432.9 L545.8,433.3 L546.1,433.6 L546.4,434.0 L546.7,434.4 L547.0,434.7 L547.2,435.1 L547.5,435.5 L547.8,435.9 L548.1,436.2 L548.3,436.6 L548.6,437.0 L548.9,437.4 L549.1,437.8 L549.4,438.2 L549.7,438.5 L549.9,438.9 L550.2,439.3 L550.4,439.7 L550.7,440.1 L550.9,440.5 L551.2,440.9 L551.4,441.3 L551.7,441.7 L551.9,442.1 L552.2,442.5 L552.4,442.9 L552.6,443.3 L552.9,443.7 L553.1,444.1 L553.3,444.5 L553.6,444.9 L553.8,445.3 L554.0,445.7 L554.2,446.1 L554.4,446.5 L554.6,446.9 L554.8,447.3 L555.1,447.7 L555.3,448.1 L555.5,448.5 L555.7,449.0 L555.8,449.4 L556.0,449.8 L556.2,450.2 L556.4,450.6 L556.6,451.0 L556.8,451.4 L557.0,451.8 L557.1,452.2 L557.3,452.6 L557.5,453.1 L557.6,453.5 L557.8,453.9 L558.0,454.3 L558.1,454.7 L558.3,455.1 L558.4,455.5 L558.6,455.9 L558.7,456.3 L558.9,456.7 L559.0,457.2 L559.2,457.6 L559.3,458.0 L559.4,458.4 L559.5,458.8 L559.7,459.2 L559.8,459.6 L559.9,460.0 L560.0,460.4 L560.1,460.8 L560.3,461.2 L560.4,461.6 L560.5,462.0 L560.6,462.4 L560.7,462.8 L560.8,463.2 L560.8,463.6 L560.9,464.0 L561.0,464.4 L561.1,464.8 L561.2,465.2 L561.3,465.6 L561.3,465.9 L561.4,466.3 L561.5,466.7 L561.5,467.1 L561.6,467.5 L561.6,467.9 L561.7,468.3 L561.7,468.6 L561.8,469.0 L561.8,469.4 L561.9,469.8 L561.9,470.1 L561.9,470.5 L562.0,470.9 L562.0,471.2 L562.0,471.6 L562.0,472.0 L562.1,472.3 L562.1,472.7 L562.1,473.0 L562.1,473.4 L562.1,473.8 L562.1,474.1 L562.1,474.5 L562.1,474.8 L562.1,475.2 L562.1,475.5 L562.1,475.8 L562.1,476.2 L562.0,476.5 L562.0,476.9 L562.0,477.2 L562.0,477.5 L561.9,477.8 L561.9,478.2 L561.9,478.5 L561.8,478.8 L561.8,479.1 L561.7,479.4 L561.7,479.8 L561.6,480.1 L561.6,480.4 L561.5,480.7 L561.5,481.0 L561.4,481.3 L561.3,481.6 L561.3,481.9 L561.2,482.2 L561.1,482.5 L561.0,482.8 L561.0,483.1 L560.9,483.3 L560.8,483.6 L560.7,483.9 L560.6,484.2 L560.5,484.4 L560.4,484.7 L560.3,485.0 L560.2,485.2 L560.1,485.5 L560.0,485.8 L559.9,486.0 L559.8,486.3 L559.7,486.5 L559.5,486.8 L559.4,487.0 L559.3,487.3 L559.2,487.5 L559.0,487.7 L558.9,488.0 L558.8,488.2 L558.6,488.4 L558.5,488.6 L558.3,488.9 L558.2,489.1 L558.1,489.3 L557.9,489.5 L557.8,489.7 L557.6,489.9 L557.4,490.1 L557.3,490.3 L557.1,490.5 L557.0,490.7 L556.8,490.9 L556.6,491.1 L556.5,491.3 L556.3,491.4 L556.1,491.6 L555.9,491.8 L555.8,492.0 L555.6,492.1 L555.4,492.3 L555.2,492.5 L555.0,492.6 L554.8,492.8 L554.6,492.9Z" fill="#345a76" stroke="#1c2636" stroke-width="0.8" stroke-linejoin="round"/>
<path d="M432.7,555.7 L432.9,556.1 L433.0,556.5 L433.2,556.9 L433.4,557.3 L433.5,557.7 L433.7,558.1 L433.9,558.5 L434.0,558.9 L434.2,559.3 L434.3,559.6 L434.5,560.0 L434.6,560.4 L434.7,560.8 L434.9,561.1 L435.0,561.5 L435.2,561.9 L435.3,562.2 L435.4,562.6 L435.5,563.0 L435.7,563.3 L435.8,563.7 L435.9,564.0 L436.0,564.4 L436.1,564.7 L436.2,565.0 L436.3,565.4 L436.4,565.7 L436.5,566.1 L436.6,566.4 L436.7,566.7 L436.8,567.0 L436.9,567.4 L437.0,567.7 L437.1,568.0 L437.2,568.3 L437.2,568.6 L437.3,568.9 L437.4,569.2 L437.5,569.5 L437.5,569.8 L437.6,570.1 L437.6,570.4 L437.7,570.7 L437.8,571.0 L437.8,571.3 L437.9,571.6 L437.9,571.8 L437.9,572.1 L438.0,572.4 L438.0,572.6 L438.0,572.9 L438.1,573.2 L438.1,573.4 L438.1,573.7 L438.2,573.9 L438.2,574.2 L438.2,574.4 L438.2,574.7 L438.2,574.9 L438.2,575.1 L438.2,575.4 L438.2,575.6 L438.2,575.8 L438.2,576.0 L438.2,576.2 L438.2,576.4 L438.2,576.7 L438.2,576.9 L438.2,577.1 L438.2,577.3 L438.1,577.5 L438.1,577.6 L438.1,577.8 L438.1,578.0 L438.0,578.2 L438.0,578.4 L438.0,578.6 L437.9,578.7 L437.9,578.9 L437.8,579.1 L437.8,579.2 L437.7,579.4 L437.7,579.5 L437.6,579.7 L437.6,579.8 L437.5,580.0 L437.4,580.1 L437.4,580.2 L437.3,580.4 L437.2,580.5 L437.2,580.6 L437.1,580.7 L437.0,580.8 L436.9,581.0 L436.8,581.1 L436.7,581.2 L436.7,581.3 L436.6,581.4 L436.5,581.5 L436.4,581.6 L436.3,581.6 L436.2,581.7 L436.1,581.8 L436.0,581.9 L435.9,582.0 L435.8,582.0 L435.6,582.1 L435.5,582.2 L435.4,582.2 L435.3,582.3 L435.2,582.3 L435.1,582.4 L434.9,582.4 L434.8,582.5 L434.7,582.5 L434.5,582.5 L434.4,582.6 L434.3,582.6 L434.1,582.6 L434.0,582.6 L433.9,582.7 L433.7,582.7 L433.6,582.7 L433.4,582.7 L433.3,582.7 L433.1,582.7 L433.0,582.7 L432.8,582.7 L432.7,582.7 L432.5,582.7 L432.3,582.6 L432.2,582.6 L432.0,582.6 L431.8,582.6 L431.7,582.6 L431.5,582.5 L431.3,582.5 L431.2,582.4 L431.0,582.4 L430.8,582.4 L430.6,582.3 L430.4,582.3 L430.3,582.2 L430.1,582.1 L429.9,582.1 L429.7,582.0 L429.5,581.9 L429.3,581.9 L429.1,581.8 L428.9,581.7 L428.8,581.6 L428.6,581.6 L428.4,581.5 L428.2,581.4 L428.0,581.3 L427.8,581.2 L427.6,581.1 L427.4,581.0 L427.1,580.9 L426.9,580.8 L426.7,580.7 L426.5,580.5 L426.3,580.4 L426.1,580.3 L425.9,580.2 L425.7,580.1 L425.5,579.9 L425.2,579.8 L425.0,579.7 L424.8,579.5 L424.6,579.4 L424.4,579.3 L424.1,579.1 L423.9,579.0 L423.7,578.8 L423.5,578.7 L423.2,578.5 L423.0,578.3 L422.8,578.2 L422.5,578.0 L422.3,577.8 L422.1,577.7 L421.8,577.5 L421.6,577.3 L421.4,577.2 L421.1,577.0 L420.9,576.8 L420.7,576.6 L420.4,576.4 L420.2,576.2 L419.9,576.0 L419.7,575.8 L419.4,575.6 L419.2,575.4 L419.0,575.2 L418.7,575.0 L418.5,574.8 L418.2,574.6 L418.0,574.4 L417.7,574.2 L417.5,574.0 L417.2,573.8 L417.0,573.5 L416.7,573.3 L416.5,573.1 L416.2,572.9 L416.0,572.6 L415.7,572.4 L415.5,572.2 L415.2,571.9 L415.0,571.7 L414.7,571.5 L414.5,571.2 L414.2,571.0 L413.9,570.7 L413.7,570.5 L413.4,570.2 L413.2,570.0 L412.9,569.7 L412.7,569.5 L412.4,569.2 L412.1,569.0 L411.9,568.7 L411.6,568.4 L411.4,568.2 L411.1,567.9 L410.9,567.6 L410.6,567.4 L410.3,567.1 L410.1,566.8 L409.8,566.5 L409.6,566.3 L409.3,566.0 L409.0,565.7 L408.8,565.4 L408.5,565.1 L408.2,564.8 L408.0,564.5 L407.7,564.3 L407.5,564.0 L407.2,563.7 L406.9,563.4 L406.7,563.1 L406.4,562.8 L406.2,562.5 L405.9,562.2 L405.6,561.9 L405.4,561.6 L405.1,561.3 L404.8,561.0 L404.6,560.7 L404.3,560.4 L404.1,560.0 L403.8,559.7 L403.5,559.4 L403.3,559.1 L403.0,558.8 L402.8,558.5 L402.5,558.2 L402.2,557.8 L402.0,557.5 L401.7,557.2 L401.5,556.9 L401.2,556.6 L400.9,556.2 L400.7,555.9 L400.4,555.6 L400.2,555.2 L399.9,554.9 L399.7,554.6 L399.4,554.3 L399.1,553.9 L398.9,553.6 L398.6,553.3 L398.4,552.9 L398.1,552.6 L397.9,552.3 L397.6,551.9 L397.4,551.6 L397.1,551.2 L396.9,550.9 L396.6,550.6 L396.4,550.2 L396.1,549.9 L395.9,549.5 L395.6,549.2 L395.4,548.8 L395.1,548.5 L394.9,548.1 L394.6,547.8 L394.4,547.5 L394.1,547.1 L393.9,546.8 L393.7,546.4 L393.4,546.1 L393.2,545.7 L392.9,545.4 L392.7,545.0 L392.4,544.6 L392.2,544.3 L392.0,543.9 L391.7,543.6 L391.5,543.2 L391.3,542.9 L391.0,542.5 L390.8,542.2 L390.6,541.8 L390.3,541.5 L390.1,541.1 L389.9,540.8 L389.6,540.4 L389.4,540.0 L389.2,539.7 L388.9,539.3 L388.7,539.0 L388.5,538.6 L388.3,538.3 L388.0,537.9 L387.8,537.5 L387.6,537.2 L387.4,536.8 L387.2,536.5 L386.9,536.1 L386.7,535.7 L386.5,535.4 L386.3,535.0 L386.1,534.7 L385.9,534.3 L385.7,534.0 L385.5,533.6 L385.2,533.2 L385.0,532.9 L384.8,532.5 L384.6,532.2 L384.4,531.8 L384.2,531.5 L384.0,531.1 L383.8,530.7 L383.6,530.4 L383.4,530.0 L383.2,529.7 L383.0,529.3 L382.8,529.0 L382.6,528.6 L382.4,528.3 L382.3,527.9 L382.1,527.5 L381.9,527.2 L381.7,526.8 L381.5,526.5 L381.3,526.1 L381.1,525.8 L381.0,525.4 L380.8,525.1 L380.6,524.7 L380.4,524.4 L380.2,524.0 L380.1,523.7 L379.9,523.3 L379.7,523.0 L379.6,522.7 L379.4,522.3 L379.2,522.0 L379.1,521.6 L378.9,521.3 L378.7,520.9 L378.6,520.6 L378.4,520.3 L378.3,519.9 L378.1,519.6 L378.0,519.2 L377.8,518.9 L377.7,518.6 L377.5,518.2 L377.4,517.9 L377.2,517.6 L377.1,517.2 L376.9,516.9 L376.8,516.6 L376.7,516.3 L376.5,515.9 L376.4,515.6 L376.3,515.3 L376.1,515.0 L376.0,514.6 L375.9,514.3 L375.7,514.0 L375.6,513.7 L375.5,513.4 L375.4,513.1 L375.3,512.7 L375.1,512.4 L375.0,512.1 L374.9,511.8 L374.8,511.5 L374.7,511.2 L374.6,510.9 L374.5,510.6 L374.4,510.3 L374.3,510.0 L374.2,509.7 L374.1,509.4 L374.0,509.1 L373.9,508.8 L373.8,508.5 L373.7,508.2 L373.6,507.9 L373.5,507.6 L373.4,507.3 L373.4,507.1 L373.3,506.8 L373.2,506.5 L373.1,506.2 L373.1,505.9 L373.0,505.7 L372.9,505.4 L372.9,505.1 L372.8,504.8 L372.7,504.6 L372.7,504.3 L372.6,504.1 L372.6,503.8 L372.5,503.5 L372.4,503.3 L372.4,503.0 L372.4,502.8 L372.3,502.5 L372.3,502.3 L372.2,502.0 L372.2,501.8 L372.1,501.5 L372.1,501.3 L372.1,501.1 L372.1,500.8 L372.0,500.6 L372.0,500.4 L372.0,500.1 L372.0,499.9 L371.9,499.7 L371.9,499.4 L371.9,499.2 L371.9,499.0 L371.9,498.8 L371.9,498.6 L371.9,498.4 L371.9,498.2 L371.9,498.0 L371.9,497.8 L371.9,497.6 L371.9,497.4 L371.9,497.2 L371.9,497.0 L371.9,496.8 L371.9,496.6 L372.0,496.4 L372.0,496.2 L372.0,496.1 L372.0,495.9 L372.1,495.7 L372.1,495.6 L372.1,495.4 L372.2,495.2 L372.2,495.1 L372.3,494.9 L372.3,494.8 L372.3,494.6 L372.4,494.5 L372.4,494.3 L372.5,494.2 L372.6,494.0 L372.6,493.9 L372.7,493.8 L372.7,493.6 L372.8,493.5 L372.9,493.4 L372.9,493.3 L373.0,493.1 L373.1,493.0 L373.2,492.9 L373.2,492.8 L373.3,492.7 L373.4,492.6 L373.5,492.5 L373.6,492.4 L373.7,492.3 L373.8,492.2 L373.9,492.1 L374.0,492.1 L374.1,492.0 L374.2,491.9 L374.3,491.8 L374.4,491.8 L374.5,491.7 L374.6,491.6 L374.8,491.6 L374.9,491.5 L375.0,491.5 L375.1,491.4 L375.3,491.4 L375.4,491.3 L375.5,491.3 L375.7,491.3 L375.8,491.2 L375.9,491.2 L376.1,491.2 L376.2,491.2 L376.4,491.1 L376.5,491.1 L376.7,491.1 L376.8,491.1 L377.0,491.1 L377.1,491.1 L377.3,491.1 L377.5,491.1 L377.6,491.2 L377.8,491.2 L378.0,491.2 L378.1,491.2 L378.3,491.2 L378.5,491.3 L378.7,491.3 L378.9,491.4 L379.0,491.4 L379.2,491.4 L379.4,491.5 L379.6,491.6 L379.8,491.6 L380.0,491.7 L380.2,491.7 L380.4,491.8 L380.6,491.9 L380.8,492.0 L381.0,492.0 L381.2,492.1 L381.5,492.2 L381.7,492.3 L381.9,492.4 L382.1,492.5 L382.3,492.6 L382.5,492.7 L382.8,492.8 L383.0,493.0 L383.2,493.1 L383.5,493.2 L383.7,493.3 L383.9,493.5 L384.2,493.6 L384.4,493.7 L384.6,493.9 L384.9,494.0 L385.1,494.2 L385.4,494.3 L385.6,494.5 L385.9,494.6 L386.1,494.8 L386.4,495.0 L386.7,495.2 L386.9,495.3 L387.2,495.5 L387.4,495.7 L387.7,495.9 L388.0,496.1 L388.2,496.3 L388.5,496.5 L388.8,496.7 L389.0,496.9 L389.3,497.1 L389.6,497.3 L389.9,497.5 L390.1,497.8 L390.4,498.0 L390.7,498.2 L391.0,498.4 L391.3,498.7 L391.6,498.9 L391.8,499.2 L392.1,499.4 L392.4,499.7 L392.7,499.9 L393.0,500.2 L393.3,500.4 L393.6,500.7 L393.9,501.0 L394.2,501.2 L394.5,501.5 L394.8,501.8 L395.1,502.1 L395.4,502.4 L395.7,502.6 L396.0,502.9 L396.3,503.2 L396.6,503.5 L396.9,503.8 L397.2,504.1 L397.5,504.4 L397.9,504.8 L398.2,505.1 L398.5,505.4 L398.8,505.7 L399.1,506.0 L399.4,506.4 L399.7,506.7 L400.0,507.0 L400.4,507.4 L400.7,507.7 L401.0,508.0 L401.3,508.4 L401.6,508.7 L401.9,509.1 L402.3,509.4 L402.6,509.8 L402.9,510.1 L403.2,510.5 L403.5,510.9 L403.9,511.2 L404.2,511.6 L404.5,512.0 L404.8,512.3 L405.2,512.7 L405.5,513.1 L405.8,513.5 L406.1,513.8 L406.4,514.2 L406.8,514.6 L407.1,515.0 L407.4,515.4 L407.7,515.8 L408.0,516.2 L408.4,516.6 L408.7,517.0 L409.0,517.4 L409.3,517.8 L409.6,518.2 L410.0,518.6 L410.3,519.0 L410.6,519.4 L410.9,519.8 L411.2,520.3 L411.6,520.7 L411.9,521.1 L412.2,521.5 L412.5,521.9 L412.8,522.4 L413.1,522.8 L413.4,523.2 L413.8,523.6 L414.1,524.1 L414.4,524.5 L414.7,524.9 L415.0,525.3 L415.3,525.8 L415.6,526.2 L415.9,526.6 L416.2,527.1 L416.5,527.5 L416.8,528.0 L417.1,528.4 L417.4,528.8 L417.7,529.3 L418.0,529.7 L418.3,530.2 L418.6,530.6 L418.9,531.0 L419.2,531.5 L419.5,531.9 L419.8,532.4 L420.1,532.8 L420.4,533.3 L420.7,533.7 L421.0,534.2 L421.2,534.6 L421.5,535.0 L421.8,535.5 L422.1,535.9 L422.4,536.4 L422.6,536.8 L422.9,537.3 L423.2,537.7 L423.4,538.2 L423.7,538.6 L424.0,539.1 L424.2,539.5 L424.5,539.9 L424.8,540.4 L425.0,540.8 L425.3,541.3 L425.5,541.7 L425.8,542.2 L426.0,542.6 L426.3,543.0 L426.5,543.5 L426.8,543.9 L427.0,544.4 L427.3,544.8 L427.5,545.2 L427.7,545.7 L428.0,546.1 L428.2,546.5 L428.4,547.0 L428.7,547.4 L428.9,547.8 L429.1,548.3 L429.3,548.7 L429.5,549.1 L429.8,549.5 L430.0,550.0 L430.2,550.4 L430.4,550.8 L430.6,551.2 L430.8,551.7 L431.0,552.1 L431.2,552.5 L431.4,552.9 L431.6,553.3 L431.8,553.7 L432.0,554.1 L432.1,554.5 L432.3,554.9 L432.5,555.3Z" fill="#263650" stroke="#6a8498" stroke-width="0.6" stroke-linejoin="round"/>
<path d="M424.1,566.2 L396.4,586.7 L396.3,586.8 L396.3,586.8 L396.2,586.8 L396.2,586.9 L396.1,586.9 L396.0,586.9 L396.0,586.9 L395.9,587.0 L395.8,587.0 L395.8,587.0 L395.7,587.0 L395.6,587.0 L395.6,587.0 L395.5,587.0 L395.4,587.0 L395.4,587.0 L395.3,587.0 L395.2,587.0 L395.1,587.0 L395.1,587.0 L395.0,587.0 L394.9,587.0 L394.8,587.0 L394.7,587.0 L394.6,587.0 L394.5,586.9 L394.5,586.9 L394.4,586.9 L394.3,586.9 L394.2,586.8 L394.1,586.8 L394.0,586.8 L393.9,586.7 L393.8,586.7 L393.7,586.7 L393.6,586.6 L393.5,586.6 L393.4,586.5 L393.3,586.5 L393.2,586.4 L393.1,586.4 L393.0,586.3 L392.9,586.3 L392.8,586.2 L392.6,586.1 L392.5,586.1 L392.4,586.0 L392.3,585.9 L392.2,585.9 L392.1,585.8 L392.0,585.7 L391.8,585.7 L391.7,585.6 L391.6,585.5 L391.5,585.4 L391.3,585.3 L391.2,585.2 L391.1,585.2 L391.0,585.1 L390.8,585.0 L390.7,584.9 L390.6,584.8 L390.5,584.7 L390.3,584.6 L390.2,584.5 L390.1,584.4 L389.9,584.3 L389.8,584.2 L389.7,584.1 L389.5,584.0 L389.4,583.8 L389.2,583.7 L389.1,583.6 L389.0,583.5 L388.8,583.4 L388.7,583.3 L388.5,583.1 L388.4,583.0 L388.2,582.9 L388.1,582.8 L388.0,582.6 L387.8,582.5 L387.7,582.4 L387.5,582.2 L387.4,582.1 L387.2,581.9 L387.1,581.8 L386.9,581.7 L386.8,581.5 L386.6,581.4 L386.5,581.2 L386.3,581.1 L386.1,580.9 L386.0,580.8 L385.8,580.6 L385.7,580.5 L385.5,580.3 L385.4,580.2 L385.2,580.0 L385.0,579.8 L384.9,579.7 L384.7,579.5 L384.6,579.3 L384.4,579.2 L384.2,579.0 L384.1,578.8 L383.9,578.7 L383.8,578.5 L383.6,578.3 L383.4,578.1 L383.3,578.0 L383.1,577.8 L382.9,577.6 L382.8,577.4 L382.6,577.2 L382.4,577.1 L382.3,576.9 L382.1,576.7 L381.9,576.5 L381.8,576.3 L381.6,576.1 L381.4,575.9 L381.3,575.7 L381.1,575.5 L380.9,575.4 L380.8,575.2 L380.6,575.0 L380.4,574.8 L380.3,574.6 L380.1,574.4 L379.9,574.2 L379.7,574.0 L379.6,573.8 L379.4,573.6 L379.2,573.3 L379.1,573.1 L378.9,572.9 L378.7,572.7 L378.5,572.5 L378.4,572.3 L378.2,572.1 L378.0,571.9 L377.8,571.7 L377.7,571.5 L377.5,571.2 L377.3,571.0 L377.2,570.8 L377.0,570.6 L376.8,570.4 L376.6,570.1 L376.5,569.9 L376.3,569.7 L376.1,569.5 L375.9,569.3 L375.8,569.0 L375.6,568.8 L375.4,568.6 L375.3,568.4 L375.1,568.1 L374.9,567.9 L374.7,567.7 L374.6,567.4 L374.4,567.2 L374.2,567.0 L374.0,566.8 L373.9,566.5 L373.7,566.3 L373.5,566.1 L373.4,565.8 L373.2,565.6 L373.0,565.4 L372.8,565.1 L372.7,564.9 L372.5,564.7 L372.3,564.4 L372.2,564.2 L372.0,563.9 L371.8,563.7 L371.7,563.5 L371.5,563.2 L371.3,563.0 L371.1,562.8 L371.0,562.5 L370.8,562.3 L370.6,562.0 L370.5,561.8 L370.3,561.5 L370.1,561.3 L370.0,561.1 L369.8,560.8 L369.6,560.6 L369.5,560.3 L369.3,560.1 L369.2,559.9 L369.0,559.6 L368.8,559.4 L368.7,559.1 L368.5,558.9 L368.3,558.6 L368.2,558.4 L368.0,558.2 L367.9,557.9 L367.7,557.7 L367.5,557.4 L367.4,557.2 L367.2,556.9 L367.1,556.7 L366.9,556.4 L366.8,556.2 L366.6,556.0 L366.4,555.7 L366.3,555.5 L366.1,555.2 L366.0,555.0 L365.8,554.7 L365.7,554.5 L365.5,554.2 L365.4,554.0 L365.2,553.8 L365.1,553.5 L364.9,553.3 L364.8,553.0 L364.6,552.8 L364.5,552.5 L364.3,552.3 L364.2,552.1 L364.0,551.8 L363.9,551.6 L363.8,551.3 L363.6,551.1 L363.5,550.9 L363.3,550.6 L363.2,550.4 L363.1,550.1 L362.9,549.9 L362.8,549.7 L362.6,549.4 L362.5,549.2 L362.4,548.9 L362.2,548.7 L362.1,548.5 L362.0,548.2 L361.8,548.0 L361.7,547.8 L361.6,547.5 L361.5,547.3 L361.3,547.1 L361.2,546.8 L361.1,546.6 L361.0,546.4 L360.8,546.1 L360.7,545.9 L360.6,545.7 L360.5,545.5 L360.3,545.2 L360.2,545.0 L360.1,544.8 L360.0,544.6 L359.9,544.3 L359.8,544.1 L359.7,543.9 L359.5,543.7 L359.4,543.4 L359.3,543.2 L359.2,543.0 L359.1,542.8 L359.0,542.6 L358.9,542.3 L358.8,542.1 L358.7,541.9 L358.6,541.7 L358.5,541.5 L358.4,541.3 L358.3,541.1 L358.2,540.8 L358.1,540.6 L358.0,540.4 L357.9,540.2 L357.8,540.0 L357.7,539.8 L357.6,539.6 L357.5,539.4 L357.4,539.2 L357.3,539.0 L357.3,538.8 L357.2,538.6 L357.1,538.4 L357.0,538.2 L356.9,538.0 L356.8,537.8 L356.8,537.6 L356.7,537.4 L356.6,537.2 L356.5,537.0 L356.5,536.9 L356.4,536.7 L356.3,536.5 L356.3,536.3 L356.2,536.1 L356.1,535.9 L356.1,535.8 L356.0,535.6 L355.9,535.4 L355.9,535.2 L355.8,535.1 L355.7,534.9 L355.7,534.7 L355.6,534.5 L355.6,534.4 L355.5,534.2 L355.5,534.0 L355.4,533.9 L355.4,533.7 L355.3,533.6 L355.3,533.4 L355.2,533.2 L355.2,533.1 L355.2,532.9 L355.1,532.8 L355.1,532.6 L355.0,532.5 L355.0,532.3 L355.0,532.2 L354.9,532.0 L354.9,531.9 L354.9,531.8 L354.8,531.6 L354.8,531.5 L354.8,531.3 L354.8,531.2 L354.7,531.1 L354.7,530.9 L354.7,530.8 L354.7,530.7 L354.7,530.6 L354.7,530.4 L354.6,530.3 L354.6,530.2 L354.6,530.1 L354.6,530.0 L354.6,529.9 L354.6,529.7 L354.6,529.6 L354.6,529.5 L354.6,529.4 L354.6,529.3 L354.6,529.2 L354.6,529.1 L354.6,529.0 L354.6,528.9 L354.6,528.8 L354.6,528.7 L354.6,528.6 L354.7,528.6 L354.7,528.5 L354.7,528.4 L354.7,528.3 L354.7,528.2 L354.7,528.1 L354.8,528.1 L354.8,528.0 L354.8,527.9 L354.8,527.9 L354.9,527.8 L354.9,527.7 L354.9,527.7 L355.0,527.6 L355.0,527.5 L355.0,527.5 L355.1,527.4 L355.1,527.4 L355.2,527.3 L355.2,527.3 L355.3,527.2 L355.3,527.2 L355.4,527.2 L355.4,527.1 L355.5,527.1 L355.5,527.0 L384.6,508.6 L384.7,508.5 L384.7,508.5 L384.8,508.4 L384.9,508.4 L385.0,508.4 L385.0,508.3 L385.1,508.3 L385.2,508.3 L385.3,508.2 L385.4,508.2 L385.5,508.2 L385.5,508.2 L385.6,508.2 L385.7,508.2 L385.8,508.2 L385.9,508.1 L386.0,508.1 L386.1,508.1 L386.2,508.1 L386.3,508.1 L386.4,508.1 L386.5,508.1 L386.6,508.1 L386.7,508.2 L386.8,508.2 L386.9,508.2 L387.0,508.2 L387.2,508.2 L387.3,508.2 L387.4,508.3 L387.5,508.3 L387.6,508.3 L387.7,508.3 L387.9,508.4 L388.0,508.4 L388.1,508.5 L388.2,508.5 L388.4,508.5 L388.5,508.6 L388.6,508.6 L388.7,508.7 L388.9,508.7 L389.0,508.8 L389.1,508.8 L389.3,508.9 L389.4,509.0 L389.5,509.0 L389.7,509.1 L389.8,509.2 L390.0,509.2 L390.1,509.3 L390.2,509.4 L390.4,509.5 L390.5,509.5 L390.7,509.6 L390.8,509.7 L391.0,509.8 L391.1,509.9 L391.3,510.0 L391.4,510.1 L391.6,510.2 L391.7,510.3 L391.9,510.4 L392.1,510.5 L392.2,510.6 L392.4,510.7 L392.5,510.8 L392.7,510.9 L392.9,511.0 L393.0,511.1 L393.2,511.2 L393.4,511.4 L393.5,511.5 L393.7,511.6 L393.9,511.7 L394.0,511.9 L394.2,512.0 L394.4,512.1 L394.5,512.3 L394.7,512.4 L394.9,512.6 L395.1,512.7 L395.2,512.8 L395.4,513.0 L395.6,513.1 L395.8,513.3 L396.0,513.4 L396.1,513.6 L396.3,513.8 L396.5,513.9 L396.7,514.1 L396.9,514.2 L397.1,514.4 L397.2,514.6 L397.4,514.8 L397.6,514.9 L397.8,515.1 L398.0,515.3 L398.2,515.5 L398.4,515.6 L398.5,515.8 L398.7,516.0 L398.9,516.2 L399.1,516.4 L399.3,516.6 L399.5,516.8 L399.7,516.9 L399.9,517.1 L400.1,517.3 L400.3,517.5 L400.5,517.7 L400.7,517.9 L400.8,518.1 L401.0,518.3 L401.2,518.6 L401.4,518.8 L401.6,519.0 L401.8,519.2 L402.0,519.4 L402.2,519.6 L402.4,519.8 L402.6,520.1 L402.8,520.3 L403.0,520.5 L403.2,520.7 L403.4,520.9 L403.6,521.2 L403.8,521.4 L404.0,521.6 L404.2,521.9 L404.4,522.1 L404.6,522.3 L404.8,522.6 L405.0,522.8 L405.2,523.0 L405.4,523.3 L405.6,523.5 L405.8,523.8 L406.0,524.0 L406.2,524.2 L406.4,524.5 L406.6,524.7 L406.8,525.0 L407.0,525.2 L407.2,525.5 L407.4,525.7 L407.6,526.0 L407.8,526.2 L407.9,526.5 L408.1,526.7 L408.3,527.0 L408.5,527.3 L408.7,527.5 L408.9,527.8 L409.1,528.0 L409.3,528.3 L409.5,528.6 L409.7,528.8 L409.9,529.1 L410.1,529.3 L410.3,529.6 L410.5,529.9 L410.6,530.1 L410.8,530.4 L411.0,530.7 L411.2,530.9 L411.4,531.2 L411.6,531.5 L411.8,531.8 L412.0,532.0 L412.1,532.3 L412.3,532.6 L412.5,532.8 L412.7,533.1 L412.9,533.4 L413.1,533.6 L413.2,533.9 L413.4,534.2 L413.6,534.5 L413.8,534.7 L414.0,535.0 L414.1,535.3 L414.3,535.6 L414.5,535.8 L414.7,536.1 L414.8,536.4 L415.0,536.7 L415.2,536.9 L415.3,537.2 L415.5,537.5 L415.7,537.8 L415.8,538.0 L416.0,538.3 L416.2,538.6 L416.3,538.9 L416.5,539.1 L416.7,539.4 L416.8,539.7 L417.0,539.9 L417.1,540.2 L417.3,540.5 L417.5,540.8 L417.6,541.0 L417.8,541.3 L417.9,541.6 L418.1,541.9 L418.2,542.1 L418.4,542.4 L418.5,542.7 L418.7,542.9 L418.8,543.2 L419.0,543.5 L419.1,543.7 L419.2,544.0 L419.4,544.3 L419.5,544.5 L419.7,544.8 L419.8,545.1 L419.9,545.3 L420.1,545.6 L420.2,545.9 L420.3,546.1 L420.4,546.4 L420.6,546.6 L420.7,546.9 L420.8,547.1 L420.9,547.4 L421.1,547.7 L421.2,547.9 L421.3,548.2 L421.4,548.4 L421.5,548.7 L421.6,548.9 L421.8,549.2 L421.9,549.4 L422.0,549.7 L422.1,549.9 L422.2,550.2 L422.3,550.4 L422.4,550.6 L422.5,550.9 L422.6,551.1 L422.7,551.4 L422.8,551.6 L422.9,551.8 L423.0,552.1 L423.1,552.3 L423.2,552.5 L423.3,552.8 L423.3,553.0 L423.4,553.2 L423.5,553.5 L423.6,553.7 L423.7,553.9 L423.7,554.1 L423.8,554.3 L423.9,554.6 L424.0,554.8 L424.0,555.0 L424.1,555.2 L424.2,555.4 L424.2,555.6 L424.3,555.9 L424.4,556.1 L424.4,556.3 L424.5,556.5 L424.6,556.7 L424.6,556.9 L424.7,557.1 L424.7,557.3 L424.8,557.5 L424.8,557.7 L424.9,557.9 L424.9,558.0 L425.0,558.2 L425.0,558.4 L425.0,558.6 L425.1,558.8 L425.1,559.0 L425.1,559.2 L425.2,559.3 L425.2,559.5 L425.2,559.7 L425.3,559.9 L425.3,560.0 L425.3,560.2 L425.3,560.4 L425.4,560.5 L425.4,560.7 L425.4,560.8 L425.4,561.0 L425.4,561.2 L425.4,561.3 L425.5,561.5 L425.5,561.6 L425.5,561.8 L425.5,561.9 L425.5,562.1 L425.5,562.2 L425.5,562.3 L425.5,562.5 L425.5,562.6 L425.5,562.7 L425.5,562.9 L425.5,563.0 L425.5,563.1 L425.4,563.3 L425.4,563.4 L425.4,563.5 L425.4,563.6 L425.4,563.7 L425.4,563.9 L425.3,564.0 L425.3,564.1 L425.3,564.2 L425.3,564.3 L425.2,564.4 L425.2,564.5 L425.2,564.6 L425.1,564.7 L425.1,564.8 L425.1,564.9 L425.0,565.0 L425.0,565.1 L425.0,565.1 L424.9,565.2 L424.9,565.3 L424.8,565.4 L424.8,565.5 L424.7,565.5 L424.7,565.6 L424.6,565.7 L424.6,565.8 L424.5,565.8 L424.5,565.9 L424.4,565.9 L424.3,566.0 L424.3,566.1 L424.2,566.1 L424.2,566.2Z" fill="#345a76" stroke="#1c2636" stroke-width="0.8" stroke-linejoin="round"/>
<path d="M392.2,570.0 L392.3,570.3 L392.4,570.5 L392.5,570.8 L392.7,571.0 L392.8,571.3 L392.9,571.5 L393.0,571.8 L393.1,572.0 L393.2,572.3 L393.4,572.5 L393.5,572.7 L393.6,573.0 L393.7,573.2 L393.8,573.4 L393.9,573.7 L394.0,573.9 L394.1,574.1 L394.2,574.4 L394.3,574.6 L394.4,574.8 L394.5,575.0 L394.6,575.3 L394.7,575.5 L394.8,575.7 L394.9,575.9 L395.0,576.1 L395.0,576.3 L395.1,576.5 L395.2,576.8 L395.3,577.0 L395.4,577.2 L395.4,577.4 L395.5,577.6 L395.6,577.8 L395.7,578.0 L395.7,578.2 L395.8,578.4 L395.9,578.6 L395.9,578.7 L396.0,578.9 L396.1,579.1 L396.1,579.3 L396.2,579.5 L396.2,579.7 L396.3,579.8 L396.4,580.0 L396.4,580.2 L396.5,580.4 L396.5,580.5 L396.6,580.7 L396.6,580.9 L396.6,581.0 L396.7,581.2 L396.7,581.4 L396.8,581.5 L396.8,581.7 L396.8,581.8 L396.9,582.0 L396.9,582.1 L396.9,582.3 L397.0,582.4 L397.0,582.6 L397.0,582.7 L397.0,582.9 L397.1,583.0 L397.1,583.1 L397.1,583.3 L397.1,583.4 L397.1,583.5 L397.1,583.6 L397.1,583.8 L397.2,583.9 L397.2,584.0 L397.2,584.1 L397.2,584.2 L397.2,584.3 L397.2,584.5 L397.2,584.6 L397.2,584.7 L397.2,584.8 L397.2,584.9 L397.2,585.0 L397.1,585.1 L397.1,585.2 L397.1,585.3 L397.1,585.3 L397.1,585.4 L397.1,585.5 L397.0,585.6 L397.0,585.7 L397.0,585.8 L397.0,585.8 L397.0,585.9 L396.9,586.0 L396.9,586.1 L396.9,586.1 L396.8,586.2 L396.8,586.2 L396.8,586.3 L396.7,586.4 L396.7,586.4 L396.6,586.5 L396.6,586.5 L396.6,586.6 L396.5,586.6 L396.5,586.7 L396.4,586.7 L396.4,586.7 L396.3,586.8 L396.3,586.8 L396.2,586.8 L396.2,586.9 L396.1,586.9 L396.0,586.9 L396.0,586.9 L395.9,587.0 L395.8,587.0 L395.8,587.0 L395.7,587.0 L395.6,587.0 L395.6,587.0 L395.5,587.0 L395.4,587.0 L395.4,587.0 L395.3,587.0 L395.2,587.0 L395.1,587.0 L395.1,587.0 L395.0,587.0 L394.9,587.0 L394.8,587.0 L394.7,587.0 L394.6,587.0 L394.5,586.9 L394.5,586.9 L394.4,586.9 L394.3,586.9 L394.2,586.8 L394.1,586.8 L394.0,586.8 L393.9,586.7 L393.8,586.7 L393.7,586.7 L393.6,586.6 L393.5,586.6 L393.4,586.5 L393.3,586.5 L393.2,586.4 L393.1,586.4 L393.0,586.3 L392.9,586.3 L392.8,586.2 L392.6,586.1 L392.5,586.1 L392.4,586.0 L392.3,585.9 L392.2,585.9 L392.1,585.8 L392.0,585.7 L391.8,585.7 L391.7,585.6 L391.6,585.5 L391.5,585.4 L391.3,585.3 L391.2,585.2 L391.1,585.2 L391.0,585.1 L390.8,585.0 L390.7,584.9 L390.6,584.8 L390.5,584.7 L390.3,584.6 L390.2,584.5 L390.1,584.4 L389.9,584.3 L389.8,584.2 L389.7,584.1 L389.5,584.0 L389.4,583.8 L389.2,583.7 L389.1,583.6 L389.0,583.5 L388.8,583.4 L388.7,583.3 L388.5,583.1 L388.4,583.0 L388.2,582.9 L388.1,582.8 L388.0,582.6 L387.8,582.5 L387.7,582.4 L387.5,582.2 L387.4,582.1 L387.2,581.9 L387.1,581.8 L386.9,581.7 L386.8,581.5 L386.6,581.4 L386.5,581.2 L386.3,581.1 L386.1,580.9 L386.0,580.8 L385.8,580.6 L385.7,580.5 L385.5,580.3 L385.4,580.2 L385.2,580.0 L385.0,579.8 L384.9,579.7 L384.7,579.5 L384.6,579.3 L384.4,579.2 L384.2,579.0 L384.1,578.8 L383.9,578.7 L383.8,578.5 L383.6,578.3 L383.4,578.1 L383.3,578.0 L383.1,577.8 L382.9,577.6 L382.8,577.4 L382.6,577.2 L382.4,577.1 L382.3,576.9 L382.1,576.7 L381.9,576.5 L381.8,576.3 L381.6,576.1 L381.4,575.9 L381.3,575.7 L381.1,575.5 L380.9,575.4 L380.8,575.2 L380.6,575.0 L380.4,574.8 L380.3,574.6 L380.1,574.4 L379.9,574.2 L379.7,574.0 L379.6,573.8 L379.4,573.6 L379.2,573.3 L379.1,573.1 L378.9,572.9 L378.7,572.7 L378.5,572.5 L378.4,572.3 L378.2,572.1 L378.0,571.9 L377.8,571.7 L377.7,571.5 L377.5,571.2 L377.3,571.0 L377.2,570.8 L377.0,570.6 L376.8,570.4 L376.6,570.1 L376.5,569.9 L376.3,569.7 L376.1,569.5 L375.9,569.3 L375.8,569.0 L375.6,568.8 L375.4,568.6 L375.3,568.4 L375.1,568.1 L374.9,567.9 L374.7,567.7 L374.6,567.4 L374.4,567.2 L374.2,567.0 L374.0,566.8 L373.9,566.5 L373.7,566.3 L373.5,566.1 L373.4,565.8 L373.2,565.6 L373.0,565.4 L372.8,565.1 L372.7,564.9 L372.5,564.7 L372.3,564.4 L372.2,564.2 L372.0,563.9 L371.8,563.7 L371.7,563.5 L371.5,563.2 L371.3,563.0 L371.1,562.8 L371.0,562.5 L370.8,562.3 L370.6,562.0 L370.5,561.8 L370.3,561.5 L370.1,561.3 L370.0,561.1 L369.8,560.8 L369.6,560.6 L369.5,560.3 L369.3,560.1 L369.2,559.9 L369.0,559.6 L368.8,559.4 L368.7,559.1 L368.5,558.9 L368.3,558.6 L368.2,558.4 L368.0,558.2 L367.9,557.9 L367.7,557.7 L367.5,557.4 L367.4,557.2 L367.2,556.9 L367.1,556.7 L366.9,556.4 L366.8,556.2 L366.6,556.0 L366.4,555.7 L366.3,555.5 L366.1,555.2 L366.0,555.0 L365.8,554.7 L365.7,554.5 L365.5,554.2 L365.4,554.0 L365.2,553.8 L365.1,553.5 L364.9,553.3 L364.8,553.0 L364.6,552.8 L364.5,552.5 L364.3,552.3 L364.2,552.1 L364.0,551.8 L363.9,551.6 L363.8,551.3 L363.6,551.1 L363.5,550.9 L363.3,550.6 L363.2,550.4 L363.1,550.1 L362.9,549.9 L362.8,549.7 L362.6,549.4 L362.5,549.2 L362.4,548.9 L362.2,548.7 L362.1,548.5 L362.0,548.2 L361.8,548.0 L361.7,547.8 L361.6,547.5 L361.5,547.3 L361.3,547.1 L361.2,546.8 L361.1,546.6 L361.0,546.4 L360.8,546.1 L360.7,545.9 L360.6,545.7 L360.5,545.5 L360.3,545.2 L360.2,545.0 L360.1,544.8 L360.0,544.6 L359.9,544.3 L359.8,544.1 L359.7,543.9 L359.5,543.7 L359.4,543.4 L359.3,543.2 L359.2,543.0 L359.1,542.8 L359.0,542.6 L358.9,542.3 L358.8,542.1 L358.7,541.9 L358.6,541.7 L358.5,541.5 L358.4,541.3 L358.3,541.1 L358.2,540.8 L358.1,540.6 L358.0,540.4 L357.9,540.2 L357.8,540.0 L357.7,539.8 L357.6,539.6 L357.5,539.4 L357.4,539.2 L357.3,539.0 L357.3,538.8 L357.2,538.6 L357.1,538.4 L357.0,538.2 L356.9,538.0 L356.8,537.8 L356.8,537.6 L356.7,537.4 L356.6,537.2 L356.5,537.0 L356.5,536.9 L356.4,536.7 L356.3,536.5 L356.3,536.3 L356.2,536.1 L356.1,535.9 L356.1,535.8 L356.0,535.6 L355.9,535.4 L355.9,535.2 L355.8,535.1 L355.7,534.9 L355.7,534.7 L355.6,534.5 L355.6,534.4 L355.5,534.2 L355.5,534.0 L355.4,533.9 L355.4,533.7 L355.3,533.6 L355.3,533.4 L355.2,533.2 L355.2,533.1 L355.2,532.9 L355.1,532.8 L355.1,532.6 L355.0,532.5 L355.0,532.3 L355.0,532.2 L354.9,532.0 L354.9,531.9 L354.9,531.8 L354.8,531.6 L354.8,531.5 L354.8,531.3 L354.8,531.2 L354.7,531.1 L354.7,530.9 L354.7,530.8 L354.7,530.7 L354.7,530.6 L354.7,530.4 L354.6,530.3 L354.6,530.2 L354.6,530.1 L354.6,530.0 L354.6,529.9 L354.6,529.7 L354.6,529.6 L354.6,529.5 L354.6,529.4 L354.6,529.3 L354.6,529.2 L354.6,529.1 L354.6,529.0 L354.6,528.9 L354.6,528.8 L354.6,528.7 L354.6,528.6 L354.7,528.6 L354.7,528.5 L354.7,528.4 L354.7,528.3 L354.7,528.2 L354.7,528.1 L354.8,528.1 L354.8,528.0 L354.8,527.9 L354.8,527.9 L354.9,527.8 L354.9,527.7 L354.9,527.7 L355.0,527.6 L355.0,527.5 L355.0,527.5 L355.1,527.4 L355.1,527.4 L355.2,527.3 L355.2,527.3 L355.3,527.2 L355.3,527.2 L355.4,527.2 L355.4,527.1 L355.5,527.1 L355.5,527.0 L355.6,527.0 L355.6,527.0 L355.7,527.0 L355.7,526.9 L355.8,526.9 L355.9,526.9 L355.9,526.9 L356.0,526.9 L356.1,526.8 L356.1,526.8 L356.2,526.8 L356.3,526.8 L356.3,526.8 L356.4,526.8 L356.5,526.8 L356.6,526.8 L356.7,526.8 L356.7,526.8 L356.8,526.8 L356.9,526.8 L357.0,526.9 L357.1,526.9 L357.2,526.9 L357.3,526.9 L357.4,526.9 L357.4,527.0 L357.5,527.0 L357.6,527.0 L357.7,527.1 L357.8,527.1 L357.9,527.1 L358.0,527.2 L358.1,527.2 L358.3,527.3 L358.4,527.3 L358.5,527.4 L358.6,527.4 L358.7,527.5 L358.8,527.5 L358.9,527.6 L359.0,527.7 L359.2,527.7 L359.3,527.8 L359.4,527.9 L359.5,527.9 L359.6,528.0 L359.8,528.1 L359.9,528.2 L360.0,528.2 L360.1,528.3 L360.3,528.4 L360.4,528.5 L360.5,528.6 L360.7,528.7 L360.8,528.8 L360.9,528.9 L361.1,529.0 L361.2,529.1 L361.4,529.2 L361.5,529.3 L361.6,529.4 L361.8,529.5 L361.9,529.6 L362.1,529.8 L362.2,529.9 L362.4,530.0 L362.5,530.1 L362.7,530.3 L362.8,530.4 L363.0,530.5 L363.1,530.6 L363.3,530.8 L363.5,530.9 L363.6,531.1 L363.8,531.2 L363.9,531.3 L364.1,531.5 L364.3,531.6 L364.4,531.8 L364.6,531.9 L364.8,532.1 L364.9,532.3 L365.1,532.4 L365.3,532.6 L365.4,532.7 L365.6,532.9 L365.8,533.1 L366.0,533.3 L366.1,533.4 L366.3,533.6 L366.5,533.8 L366.7,534.0 L366.8,534.1 L367.0,534.3 L367.2,534.5 L367.4,534.7 L367.6,534.9 L367.7,535.1 L367.9,535.3 L368.1,535.5 L368.3,535.7 L368.5,535.9 L368.7,536.1 L368.8,536.3 L369.0,536.5 L369.2,536.7 L369.4,536.9 L369.6,537.1 L369.8,537.3 L370.0,537.5 L370.2,537.7 L370.3,537.9 L370.5,538.2 L370.7,538.4 L370.9,538.6 L371.1,538.8 L371.3,539.0 L371.5,539.3 L371.7,539.5 L371.9,539.7 L372.1,540.0 L372.3,540.2 L372.5,540.4 L372.7,540.7 L372.9,540.9 L373.1,541.1 L373.3,541.4 L373.5,541.6 L373.7,541.9 L373.9,542.1 L374.1,542.4 L374.3,542.6 L374.5,542.9 L374.7,543.1 L374.9,543.4 L375.1,543.6 L375.3,543.9 L375.5,544.1 L375.7,544.4 L375.9,544.6 L376.1,544.9 L376.2,545.1 L376.4,545.4 L376.6,545.7 L376.8,545.9 L377.0,546.2 L377.2,546.5 L377.4,546.7 L377.6,547.0 L377.8,547.3 L378.0,547.5 L378.2,547.8 L378.4,548.1 L378.6,548.3 L378.8,548.6 L379.0,548.9 L379.2,549.1 L379.4,549.4 L379.6,549.7 L379.8,550.0 L380.0,550.2 L380.2,550.5 L380.4,550.8 L380.6,551.1 L380.8,551.4 L381.0,551.6 L381.2,551.9 L381.4,552.2 L381.6,552.5 L381.8,552.8 L382.0,553.0 L382.2,553.3 L382.3,553.6 L382.5,553.9 L382.7,554.2 L382.9,554.4 L383.1,554.7 L383.3,555.0 L383.5,555.3 L383.7,555.6 L383.8,555.9 L384.0,556.1 L384.2,556.4 L384.4,556.7 L384.6,557.0 L384.8,557.3 L384.9,557.5 L385.1,557.8 L385.3,558.1 L385.5,558.4 L385.7,558.7 L385.8,559.0 L386.0,559.2 L386.2,559.5 L386.4,559.8 L386.5,560.1 L386.7,560.4 L386.9,560.6 L387.1,560.9 L387.2,561.2 L387.4,561.5 L387.6,561.8 L387.7,562.0 L387.9,562.3 L388.1,562.6 L388.2,562.9 L388.4,563.2 L388.5,563.4 L388.7,563.7 L388.9,564.0 L389.0,564.2 L389.2,564.5 L389.3,564.8 L389.5,565.1 L389.6,565.3 L389.8,565.6 L389.9,565.9 L390.1,566.1 L390.2,566.4 L390.4,566.7 L390.5,566.9 L390.7,567.2 L390.8,567.5 L390.9,567.7 L391.1,568.0 L391.2,568.3 L391.4,568.5 L391.5,568.8 L391.6,569.0 L391.8,569.3 L391.9,569.5 L392.0,569.8Z" fill="#263650" stroke="#6a8498" stroke-width="0.6" stroke-linejoin="round"/>
<path d="M394.3,479.0 C426.3,458.9 458.2,438.9 490.2,418.8 C488.1,422.1 486.0,425.3 483.9,428.5 C481.3,431.4 478.6,434.3 476.0,437.2 C478.1,438.5 480.2,439.9 482.3,441.2 C486.0,443.8 491.1,447.2 493.4,449.1 C495.6,451.0 496.3,451.2 495.8,452.3 C495.3,453.4 492.1,454.4 490.2,455.5 C489.7,455.2 489.1,455.0 488.6,454.7 C485.4,453.1 482.1,451.6 478.9,450.0 C478.3,449.0 477.6,448.1 477.0,447.1 C461.3,456.2 445.7,465.4 430.0,474.5 C422.8,479.2 415.7,483.8 408.5,488.5 C404.2,487.0 399.8,485.5 395.5,484.0 C395.1,482.3 394.7,480.7 394.3,479.0Z" fill="#263650" stroke="#6a8498" stroke-width="0.5" />
<path d="M394.3,479.3 L396.1,483.7 L396.4,483.8 L396.6,483.8 L396.8,483.9 L397.1,484.0 L397.3,484.2 L397.5,484.3 L397.8,484.4 L398.0,484.5 L398.3,484.6 L398.5,484.7 L398.7,484.9 L399.0,485.0 L399.2,485.1 L399.5,485.3 L399.8,485.4 L400.0,485.6 L400.3,485.7 L400.5,485.9 L400.8,486.0 L401.1,486.2 L401.3,486.4 L401.6,486.5 L401.9,486.7 L402.1,486.9 L402.4,487.1 L402.7,487.3 L402.9,487.5 L403.2,487.7 L403.5,487.8 L403.8,488.0 L404.1,488.3 L404.3,488.5 L404.6,488.7 L404.9,488.9 L405.2,489.1 L405.5,489.3 L405.8,489.6 L406.1,489.8 L406.4,490.0 L406.7,490.3 L407.0,490.5 L407.2,490.7 L407.5,491.0 L407.8,491.2 L408.1,491.5 L408.4,491.7 L408.7,492.0 L409.0,492.3 L409.4,492.5 L409.7,492.8 L410.0,493.1 L410.3,493.4 L410.6,493.6 L410.9,493.9 L411.2,494.2 L411.5,494.5 L411.8,494.8 L412.1,495.1 L412.4,495.4 L412.8,495.7 L413.1,496.0 L413.4,496.3 L413.7,496.6 L414.0,496.9 L414.3,497.3 L414.6,497.6 L415.0,497.9 L415.3,498.2 L415.6,498.6 L415.9,498.9 L416.2,499.2 L416.6,499.6 L416.9,499.9 L417.2,500.3 L417.5,500.6 L417.8,501.0 L418.2,501.3 L418.5,501.7 L418.8,502.0 L419.1,502.4 L419.4,502.7 L419.8,503.1 L420.1,503.5 L420.4,503.8 L420.7,504.2 L421.0,504.6 L421.4,505.0 L421.7,505.4 L422.0,505.7 L422.3,506.1 L422.6,506.5 L423.0,506.9 L423.3,507.3 L423.6,507.7 L423.9,508.1 L424.2,508.5 L424.6,508.9 L424.9,509.3 L425.2,509.7 L425.5,510.1 L425.8,510.5 L426.1,510.9 L426.4,511.3 L426.8,511.7 L427.1,512.1 L427.4,512.5 L427.7,512.9 L428.0,513.4 L428.3,513.8 L428.6,514.2 L428.9,514.6 L429.2,515.0 L429.5,515.5 L429.8,515.9 L430.1,516.3 L430.4,516.7 L430.7,517.2 L431.0,517.6 L431.3,518.0 L431.6,518.4 L431.9,518.9 L432.2,519.3 L432.5,519.7 L432.8,520.2 L433.1,520.6 L433.4,521.0 L433.7,521.5 L434.0,521.9 L434.2,522.4 L434.5,522.8 L434.8,523.2 L435.1,523.7 L435.4,524.1 L435.6,524.5 L435.9,525.0 L436.2,525.4 L436.5,525.9 L436.7,526.3 L437.0,526.7 L437.3,527.2 L437.5,527.6 L437.8,528.1 L438.0,528.5 L438.3,528.9 L438.6,529.4 L438.8,529.8 L439.1,530.3 L439.3,530.7 L439.6,531.1 L439.8,531.6 L440.1,532.0 L440.3,532.4 L440.5,532.9 L440.8,533.3 L441.0,533.8 L441.2,534.2 L441.5,534.6 L441.7,535.1 L441.9,535.5 L446.0,538.0 L451.6,538.5" fill="none" stroke="#1c2636" stroke-width="0.8"/>
<path d="M446.0,486.5 C462.9,475.6 479.7,464.8 496.6,453.9" fill="none" stroke="#1c2636" stroke-width="0.8" />
<path d="M447.5,484.0 C446.6,484.3 445.6,485.9 445.0,487.5 C444.4,489.1 443.0,490.9 443.7,493.7 C444.4,496.5 447.1,500.6 449.4,504.4 C451.6,508.2 455.8,513.5 457.2,516.6 C458.6,519.8 458.4,520.9 457.5,523.3 C456.6,525.7 453.9,528.8 451.6,531.0 C449.3,533.2 446.4,534.7 443.8,536.5 C445.7,537.5 447.0,539.8 449.4,539.6 C451.8,539.4 455.6,537.4 458.3,535.5 C461.0,533.6 464.0,530.8 465.5,528.5 C467.0,526.2 467.8,525.3 467.5,522.0 C467.2,518.7 465.9,513.9 463.7,508.9 C461.5,503.9 456.4,495.7 454.2,491.8 C452.0,487.9 451.7,486.9 450.6,485.6 C449.5,484.3 448.4,483.7 447.5,484.0Z" fill="#263650" stroke="#6a8498" stroke-width="0.5" />
<path d="M461.1,485.0 C461.9,484.2 460.1,484.9 463.5,482.6 C466.9,480.4 475.6,475.2 481.7,471.5 C490.5,465.8 499.2,460.2 508.0,454.5 C508.3,456.0 508.7,457.5 509.0,459.0 C499.6,465.2 490.3,471.3 480.9,477.5 C475.2,481.3 469.6,485.2 463.9,489.0 C463.0,487.7 462.0,486.3 461.1,485.0Z" fill="#263650" stroke="#6a8498" stroke-width="0.5" />
<path d="M463.9,489.3 C466.1,493.4 468.3,497.2 470.6,501.6 C472.9,506.1 475.4,511.2 477.8,516.0" fill="none" stroke="#1c2636" stroke-width="0.8" />
<path d="M477.8,516.5 C487.1,512.0 496.4,507.5 505.7,503.0 C515.5,495.0 525.2,487.0 535.0,479.0 C539.6,475.1 544.2,471.3 548.8,467.4 C548.8,470.2 549.6,473.2 548.8,475.9 C548.0,478.6 545.6,481.0 544.0,483.5 C532.5,492.3 521.0,501.2 509.5,510.0 C497.2,519.3 485.0,528.6 472.7,537.9 C471.3,537.4 468.9,537.7 468.5,536.5 C468.1,535.3 468.6,534.2 470.2,530.9 C471.8,527.6 475.3,521.3 477.8,516.5Z" fill="#263650" stroke="#6a8498" stroke-width="0.5" />
<path d="M482.5,470.6 C490.4,465.9 501.6,459.4 506.1,456.6 C510.6,453.8 508.7,454.8 509.4,453.7 C510.1,452.6 510.6,451.3 510.4,449.9 C510.2,448.5 509.4,446.9 508.0,445.2 C506.6,443.5 504.5,441.2 502.3,439.5 C500.1,437.8 497.1,435.9 494.7,434.7 C492.2,433.5 489.2,433.2 487.6,432.3 C486.0,431.4 485.4,430.5 485.2,429.5 C485.0,428.5 485.7,427.4 486.6,426.2 C487.5,425.0 488.7,423.4 490.4,422.4 C492.1,421.4 494.5,420.5 496.6,420.0 C498.8,419.5 501.1,419.4 503.3,419.5 C505.5,419.6 507.5,419.9 509.9,420.9 C512.3,421.8 515.1,423.5 517.5,425.2 C519.9,426.9 522.1,429.0 524.2,430.9 C526.3,432.8 527.6,433.8 530.0,436.6 C532.4,439.5 535.8,443.6 538.5,448.0 C541.2,452.4 544.3,459.2 546.0,463.2 C547.7,467.2 548.8,468.6 548.5,472.0 C548.2,475.4 545.5,479.7 544.0,483.5 C532.5,492.3 521.0,501.2 509.5,510.0 C500.5,496.9 491.5,483.7 482.5,470.6Z" fill="#263650" stroke="none" stroke-width="0" />
<path d="M512.5,494.2 L512.6,494.1 L512.8,494.1 L533.8,479.1 L533.9,479.0 L538.4,475.0 L538.5,474.9 L538.5,474.8 L538.6,474.7 L538.7,474.6 L538.7,474.5 L538.8,474.3 L540.1,469.5 L540.1,469.4 L540.1,469.3 L540.1,469.2 L540.1,469.0 L540.1,468.9 L540.0,468.8 L536.8,459.3 L536.8,459.2 L536.7,459.1 L532.6,451.9 L532.6,451.8 L532.5,451.7 L527.1,445.4 L521.0,438.2 L520.9,438.1 L520.8,438.0 L515.0,433.0 L514.9,432.9 L514.8,432.9 L514.7,432.8 L514.6,432.7 L508.2,430.9 L508.0,430.9 L507.9,430.9 L507.8,430.9 L507.6,430.9 L500.8,431.7 L500.7,431.7 L500.6,431.8 L500.5,431.8 L497.0,433.3 L496.9,433.4 L496.8,433.4 L496.7,433.5 L496.6,433.6 L496.5,433.7 L496.4,433.8 L496.4,433.9 L496.3,434.0 L496.3,434.1 L496.2,434.2 L496.2,434.4 L496.2,434.5 L496.2,437.0 L496.2,437.1 L496.2,437.3 L496.3,437.4 L496.3,437.5 L496.4,437.6 L496.4,437.7 L496.5,437.8 L496.6,437.9 L496.7,438.0 L499.2,440.0 L499.2,440.0 L509.0,447.4 L511.1,451.6 L509.8,456.3 L505.2,461.0 L479.4,477.4 L479.4,477.4 L479.2,477.5 L496.4,501.2 L512.5,494.2Z" fill="#345a76" stroke="none"/>
<path d="M495.6,500.1 L511.8,493.1 L512.1,492.9 L532.9,478.0 L533.1,477.9 L537.2,474.3 L537.4,474.1 L537.5,473.8 L537.6,473.6 L538.7,469.6 L538.7,469.3 L538.7,469.1 L538.6,468.8 L535.6,459.8 L535.5,459.6 L531.6,452.6 L531.4,452.4 L526.1,446.2 L520.1,439.1 L519.9,438.9 L514.4,434.2 L514.2,434.0 L513.9,433.9 L508.1,432.3 L507.8,432.2 L507.5,432.2 L501.2,433.0 L500.8,433.1 L498.4,434.1 L498.2,434.3 L497.9,434.4 L497.8,434.7 L497.6,434.9 L497.5,435.2 L497.5,435.5 L497.5,436.3 L497.5,436.5 L497.6,436.8 L497.7,437.0 L497.9,437.3 L498.1,437.4 L500.0,439.0 L500.0,439.0 L510.0,446.5 L512.5,451.5 L511.0,457.0 L506.0,462.0 L480.1,478.5 L480.1,478.5 L480.0,478.6 M493.4,497.1 L510.0,489.8 L510.3,489.7 L530.6,475.2 L530.7,475.1 L533.9,472.3 L534.1,472.1 L534.2,471.8 L534.3,471.5 L534.8,469.8 L534.9,469.5 L534.9,469.2 L534.8,468.9 L532.3,461.4 L532.1,461.1 L528.5,454.8 L528.4,454.5 L523.3,448.6 L517.4,441.7 L517.3,441.5 L512.7,437.6 L512.4,437.4 L512.1,437.2 L507.8,436.0 L507.5,436.0 L507.2,436.0 L506.6,436.1 L506.3,436.1 L506.0,436.3 L505.8,436.4 L505.6,436.6 L505.4,436.9 L505.3,437.2 L505.2,437.5 L505.3,437.8 L505.3,438.0 L505.5,438.3 L505.6,438.6 L505.8,438.8 L512.9,444.1 L516.4,451.1 L514.3,458.9 L508.3,464.9 L482.1,481.6 M491.1,494.0 L508.2,486.6 L508.5,486.4 L528.3,472.3 L528.4,472.2 L530.4,470.4 L530.6,470.2 L530.8,469.9 L530.9,469.7 L530.9,469.4 L530.9,469.1 L530.9,468.8 L528.9,462.9 L528.7,462.6 L525.5,456.9 L525.3,456.7 L522.2,453.0 L522.0,452.8 L521.7,452.6 L521.5,452.5 L521.2,452.5 L520.9,452.5 L520.6,452.6 L520.3,452.7 L520.1,452.8 L519.9,453.1 L519.7,453.3 L519.6,453.6 L517.6,460.8 L510.7,467.8 L484.3,484.6 M488.9,490.9 L506.4,483.3 L506.6,483.2 L526.0,469.4 L526.1,469.3 L526.1,469.2 L526.3,469.0 L526.5,468.8 L526.6,468.5 L526.6,468.2 L526.6,467.9 L526.6,467.6 L525.5,464.4 L525.4,464.1 L523.9,461.6 L523.7,461.4 L523.5,461.2 L523.3,461.0 L523.0,460.9 L522.7,460.8 L522.4,460.9 L522.1,460.9 L521.9,461.0 L521.6,461.2 L521.4,461.4 L521.3,461.7 L521.2,461.9 L520.9,462.8 L513.0,470.7 L486.5,487.6" fill="none" stroke="#b1b4b6" stroke-width="1.25" stroke-linejoin="round"/>
<path d="M482.5,470.6 C490.4,465.9 501.6,459.4 506.1,456.6 C510.6,453.8 508.7,454.8 509.4,453.7 C510.1,452.6 510.6,451.3 510.4,449.9 C510.2,448.5 509.4,446.9 508.0,445.2 C506.6,443.5 504.5,441.2 502.3,439.5 C500.1,437.8 497.1,435.9 494.7,434.7 C492.2,433.5 489.2,433.2 487.6,432.3 C486.0,431.4 485.4,430.5 485.2,429.5 C485.0,428.5 485.7,427.4 486.6,426.2 C487.5,425.0 488.7,423.4 490.4,422.4 C492.1,421.4 494.5,420.5 496.6,420.0 C498.8,419.5 501.1,419.4 503.3,419.5 C505.5,419.6 507.5,419.9 509.9,420.9 C512.3,421.8 515.1,423.5 517.5,425.2 C519.9,426.9 522.1,429.0 524.2,430.9 C526.3,432.8 527.6,433.8 530.0,436.6 C532.4,439.5 535.8,443.6 538.5,448.0 C541.2,452.4 544.3,459.2 546.0,463.2 C547.7,467.2 548.8,468.6 548.5,472.0 C548.2,475.4 545.5,479.7 544.0,483.5 C532.5,492.3 521.0,501.2 509.5,510.0 C500.5,496.9 491.5,483.7 482.5,470.6Z" fill="none" stroke="#b64d2a" stroke-width="1.45"/>
<path d="M579.7,483.2 L579.9,483.0 L580.2,482.8 L580.4,482.6 L580.6,482.4 L580.8,482.2 L581.1,482.0 L581.3,481.8 L581.5,481.6 L581.7,481.4 L581.9,481.2 L582.1,480.9 L582.3,480.7 L582.5,480.5 L582.7,480.2 L582.9,480.0 L583.1,479.7 L583.3,479.5 L583.5,479.2 L583.7,479.0 L583.9,478.7 L584.1,478.5 L584.2,478.2 L584.4,477.9 L584.6,477.7 L584.8,477.4 L584.9,477.1 L585.1,476.8 L585.3,476.5 L585.4,476.2 L585.6,476.0 L585.7,475.7 L585.9,475.4 L586.0,475.1 L586.2,474.8 L586.3,474.4 L586.4,474.1 L586.6,473.8 L586.7,473.5 L586.8,473.2 L587.0,472.9 L587.1,472.5 L587.2,472.2 L587.3,471.9 L587.4,471.5 L587.5,471.2 L587.6,470.8 L587.7,470.5 L587.8,470.1 L587.9,469.8 L588.0,469.4 L588.1,469.1 L588.2,468.7 L588.3,468.4 L588.4,468.0 L588.4,467.6 L588.5,467.2 L588.6,466.9 L588.6,466.5 L588.7,466.1 L588.8,465.7 L588.8,465.3 L588.9,465.0 L588.9,464.6 L588.9,464.2 L589.0,463.8 L589.0,463.4 L589.1,463.0 L589.1,462.6 L589.1,462.2 L589.1,461.8 L589.1,461.4 L589.2,460.9 L589.2,460.5 L589.2,460.1 L589.2,459.7 L589.2,459.3 L589.2,458.8 L589.2,458.4 L589.1,458.0 L589.1,457.6 L589.1,457.1 L589.1,456.7 L589.1,456.3 L589.0,455.8 L589.0,455.4 L589.0,455.0 L588.9,454.5 L588.9,454.1 L588.8,453.6 L588.8,453.2 L588.7,452.7 L588.6,452.3 L588.6,451.8 L588.5,451.4 L588.4,450.9 L588.4,450.5 L588.3,450.0 L588.2,449.5 L588.1,449.1 L588.0,448.6 L587.9,448.2 L587.8,447.7 L587.7,447.2 L587.6,446.8 L587.5,446.3 L587.4,445.8 L587.3,445.4 L587.1,444.9 L587.0,444.4 L586.9,444.0 L586.7,443.5 L586.6,443.0 L586.5,442.6 L586.3,442.1 L586.2,441.6 L586.0,441.1 L585.9,440.7 L585.7,440.2 L585.5,439.7 L585.4,439.2 L585.2,438.8 L585.0,438.3 L584.9,437.8 L584.7,437.3 L584.5,436.9 L584.3,436.4 L584.1,435.9 L583.9,435.4 L583.7,435.0 L583.5,434.5 L583.3,434.0 L583.1,433.6 L582.9,433.1 L582.7,432.6 L582.4,432.1 L582.2,431.7 L582.0,431.2 L581.8,430.7 L581.5,430.3 L581.3,429.8 L581.1,429.3 L580.8,428.9 L580.6,428.4 L580.3,427.9 L580.1,427.5 L579.8,427.0 L579.6,426.5 L579.3,426.1 L579.0,425.6 L578.8,425.2 L578.5,424.7 L578.2,424.2 L577.9,423.8 L577.7,423.3 L577.4,422.9 L577.1,422.4 L576.8,422.0 L576.5,421.5 L576.2,421.1 L575.9,420.6 L575.6,420.2 L575.3,419.8 L575.0,419.3 L574.7,418.9 L574.4,418.5 L574.1,418.0 L573.8,417.6 L573.5,417.2 L573.1,416.7 L572.8,416.3 L572.5,415.9 L572.2,415.5 L571.8,415.1 L571.5,414.6 L571.2,414.2 L570.8,413.8 L570.5,413.4 L570.2,413.0 L569.8,412.6 L569.5,412.2 L569.1,411.8 L568.8,411.4 L568.4,411.0 L568.1,410.6 L567.7,410.3 L567.4,409.9 L567.0,409.5 L566.6,409.1 L566.3,408.7 L565.9,408.4 L565.5,408.0 L565.2,407.6 L564.8,407.3 L564.4,406.9 L564.1,406.6 L563.7,406.2 L563.3,405.9 L562.9,405.5 L562.6,405.2 L562.2,404.8 L561.8,404.5 L561.4,404.2 L561.1,403.8 L560.7,403.5 L560.3,403.2 L559.9,402.9 L559.5,402.5 L559.1,402.2 L558.7,401.9 L558.4,401.6 L558.0,401.3 L557.6,401.0 L557.2,400.7 L556.8,400.4 L556.4,400.1 L556.0,399.9 L555.6,399.6 L555.2,399.3 L554.8,399.0 L554.4,398.8 L554.0,398.5 L553.6,398.2 L553.2,398.0 L552.8,397.7 L552.4,397.5 L552.0,397.2 L551.6,397.0 L551.2,396.8 L550.9,396.5 L550.5,396.3 L550.1,396.1 L549.7,395.9 L549.3,395.6 L548.9,395.4 L548.5,395.2 L548.1,395.0 L547.7,394.8 L547.3,394.6 L546.9,394.4 L546.5,394.2 L546.1,394.1 L545.7,393.9 L545.3,393.7 L544.9,393.5 L544.5,393.4 L544.1,393.2 L543.7,393.1 L543.3,392.9 L542.9,392.7 L542.5,392.6 L542.1,392.5 L541.8,392.3 L541.4,392.2 L541.0,392.1 L540.6,391.9 L540.2,391.8 L539.8,391.7 L539.4,391.6 L539.0,391.5 L538.7,391.4 L538.3,391.3 L537.9,391.2 L537.5,391.1 L537.1,391.0 L536.8,390.9 L536.4,390.9 L536.0,390.8 L535.6,390.7 L535.3,390.7 L534.9,390.6 L534.5,390.5 L534.2,390.5 L533.8,390.4 L533.4,390.4 L533.1,390.4 L532.7,390.3 L532.4,390.3 L532.0,390.3 L531.6,390.2 L531.3,390.2 L530.9,390.2 L530.6,390.2 L530.2,390.2 L529.9,390.2 L529.5,390.2 L529.2,390.2 L528.8,390.2 L528.5,390.2 L528.2,390.2 L527.8,390.3 L527.5,390.3 L527.2,390.3 L526.8,390.4 L526.5,390.4 L526.2,390.4 L525.8,390.5 L525.5,390.5 L525.2,390.6 L524.9,390.7 L524.6,390.7 L524.2,390.8 L523.9,390.9 L523.6,390.9 L523.3,391.0 L523.0,391.1 L522.7,391.2 L522.4,391.3 L522.1,391.4 L521.8,391.5 L521.5,391.6 L521.2,391.7 L520.9,391.8 L520.6,391.9 L520.4,392.0 L520.1,392.1 L519.8,392.2 L519.5,392.4 L519.2,392.5 L519.0,392.6 L518.7,392.8 L518.4,392.9 L518.2,393.0 L517.9,393.2 L517.6,393.3 L498.3,404.8 L498.0,405.0 L497.8,405.1 L497.5,405.3 L497.3,405.4 L497.1,405.6 L496.8,405.7 L496.6,405.9 L496.4,406.1 L496.2,406.3 L495.9,406.4 L495.7,406.6 L495.5,406.8 L495.3,407.0 L495.1,407.2 L494.9,407.4 L494.7,407.6 L494.5,407.8 L494.3,408.0 L494.1,408.2 L493.9,408.4 L493.7,408.6 L493.5,408.8 L493.3,409.0 L493.1,409.3 L492.9,409.5 L492.8,409.7 L492.6,409.9 L492.4,410.2 L492.3,410.4 L492.1,410.6 L491.9,410.9 L491.8,411.1 L491.6,411.4 L491.5,411.6 L491.3,411.9 L491.2,412.1 L491.0,412.4 L490.9,412.6 L490.7,412.9 L490.6,413.2 L490.5,413.4 L490.3,413.7 L490.2,414.0 L490.1,414.3 L490.0,414.5 L489.8,414.8 L489.7,415.1 L489.6,415.4 L489.5,415.7 L489.4,416.0 L489.3,416.3 L489.2,416.5 L489.1,416.8 L489.0,417.1 L488.9,417.4 L488.8,417.7 L488.7,418.0 L488.6,418.4 L488.6,418.7 L488.5,419.0 L488.4,419.3 L488.3,419.6 L488.3,419.9 L488.2,420.2 L488.2,420.4 L374.3,491.8 L374.2,491.9 L374.1,492.0 L374.0,492.1 L373.9,492.1 L373.8,492.2 L373.7,492.3 L373.6,492.4 L373.5,492.5 L373.4,492.6 L373.3,492.7 L373.2,492.8 L373.2,492.9 L373.1,493.0 L373.0,493.1 L372.9,493.3 L372.9,493.4 L372.8,493.5 L372.7,493.6 L372.7,493.8 L372.6,493.9 L372.6,494.0 L372.5,494.2 L372.4,494.3 L372.4,494.5 L372.3,494.6 L372.3,494.8 L372.3,494.9 L372.2,495.1 L372.2,495.2 L372.1,495.4 L372.1,495.6 L372.1,495.7 L372.0,495.9 L372.0,496.1 L372.0,496.2 L372.0,496.4 L371.9,496.6 L371.9,496.8 L371.9,497.0 L371.9,497.2 L371.9,497.4 L371.9,497.6 L371.9,497.8 L371.9,498.0 L371.9,498.2 L371.9,498.4 L371.9,498.6 L371.9,498.8 L371.9,499.0 L371.9,499.2 L371.9,499.4 L371.9,499.7 L372.0,499.9 L372.0,500.1 L372.0,500.4 L372.0,500.6 L372.1,500.8 L372.1,501.1 L372.1,501.3 L372.1,501.5 L372.2,501.8 L372.2,502.0 L372.3,502.3 L372.3,502.5 L372.4,502.8 L372.4,503.0 L372.4,503.3 L372.5,503.5 L372.6,503.8 L372.6,504.1 L372.7,504.3 L372.7,504.6 L372.8,504.8 L372.9,505.1 L372.9,505.4 L373.0,505.7 L373.1,505.9 L373.1,506.2 L373.2,506.5 L373.3,506.8 L373.4,507.1 L373.4,507.3 L373.5,507.6 L373.6,507.9 L373.7,508.2 L373.8,508.5 L373.9,508.8 L374.0,509.1 L374.1,509.4 L374.2,509.7 L374.3,510.0 L374.4,510.3 L374.5,510.6 L374.6,510.9 L374.7,511.2 L374.8,511.5 L374.9,511.8 L375.0,512.1 L375.1,512.4 L375.3,512.7 L375.4,513.1 L375.5,513.4 L375.6,513.7 L375.7,514.0 L375.8,514.1 L355.5,527.0 L355.5,527.1 L355.4,527.1 L355.4,527.2 L355.3,527.2 L355.3,527.2 L355.2,527.3 L355.2,527.3 L355.1,527.4 L355.1,527.4 L355.0,527.5 L355.0,527.5 L355.0,527.6 L354.9,527.7 L354.9,527.7 L354.9,527.8 L354.8,527.9 L354.8,527.9 L354.8,528.0 L354.8,528.1 L354.7,528.1 L354.7,528.2 L354.7,528.3 L354.7,528.4 L354.7,528.5 L354.7,528.6 L354.6,528.6 L354.6,528.7 L354.6,528.8 L354.6,528.9 L354.6,529.0 L354.6,529.1 L354.6,529.2 L354.6,529.3 L354.6,529.4 L354.6,529.5 L354.6,529.6 L354.6,529.7 L354.6,529.9 L354.6,530.0 L354.6,530.1 L354.6,530.2 L354.6,530.3 L354.7,530.4 L354.7,530.6 L354.7,530.7 L354.7,530.8 L354.7,530.9 L354.7,531.1 L354.8,531.2 L354.8,531.3 L354.8,531.5 L354.8,531.6 L354.9,531.8 L354.9,531.9 L354.9,532.0 L355.0,532.2 L355.0,532.3 L355.0,532.5 L355.1,532.6 L355.1,532.8 L355.2,532.9 L355.2,533.1 L355.2,533.2 L355.3,533.4 L355.3,533.6 L355.4,533.7 L355.4,533.9 L355.5,534.0 L355.5,534.2 L355.6,534.4 L355.6,534.5 L355.7,534.7 L355.7,534.9 L355.8,535.1 L355.9,535.2 L355.9,535.4 L356.0,535.6 L356.1,535.8 L356.1,535.9 L356.2,536.1 L356.3,536.3 L356.3,536.5 L356.4,536.7 L356.5,536.9 L356.5,537.0 L356.6,537.2 L356.7,537.4 L356.8,537.6 L356.8,537.8 L356.9,538.0 L357.0,538.2 L357.1,538.4 L357.2,538.6 L357.3,538.8 L357.3,539.0 L357.4,539.2 L357.5,539.4 L357.6,539.6 L357.7,539.8 L357.8,540.0 L357.9,540.2 L358.0,540.4 L358.1,540.6 L358.2,540.8 L358.3,541.1 L358.4,541.3 L358.5,541.5 L358.6,541.7 L358.7,541.9 L358.8,542.1 L358.9,542.3 L359.0,542.6 L359.1,542.8 L359.2,543.0 L359.3,543.2 L359.4,543.4 L359.5,543.7 L359.7,543.9 L359.8,544.1 L359.9,544.3 L360.0,544.6 L360.1,544.8 L360.2,545.0 L360.3,545.2 L360.5,545.5 L360.6,545.7 L360.7,545.9 L360.8,546.1 L361.0,546.4 L361.1,546.6 L361.2,546.8 L361.3,547.1 L361.5,547.3 L361.6,547.5 L361.7,547.8 L361.8,548.0 L362.0,548.2 L362.1,548.5 L362.2,548.7 L362.4,548.9 L362.5,549.2 L362.6,549.4 L362.8,549.7 L362.9,549.9 L363.1,550.1 L363.2,550.4 L363.3,550.6 L363.5,550.9 L363.6,551.1 L363.8,551.3 L363.9,551.6 L364.0,551.8 L364.2,552.1 L364.3,552.3 L364.5,552.5 L364.6,552.8 L364.8,553.0 L364.9,553.3 L365.1,553.5 L365.2,553.8 L365.4,554.0 L365.5,554.2 L365.7,554.5 L365.8,554.7 L366.0,555.0 L366.1,555.2 L366.3,555.5 L366.4,555.7 L366.6,556.0 L366.8,556.2 L366.9,556.4 L367.1,556.7 L367.2,556.9 L367.4,557.2 L367.5,557.4 L367.7,557.7 L367.9,557.9 L368.0,558.2 L368.2,558.4 L368.3,558.6 L368.5,558.9 L368.7,559.1 L368.8,559.4 L369.0,559.6 L369.2,559.9 L369.3,560.1 L369.5,560.3 L369.6,560.6 L369.8,560.8 L370.0,561.1 L370.1,561.3 L370.3,561.5 L370.5,561.8 L370.6,562.0 L370.8,562.3 L371.0,562.5 L371.1,562.8 L371.3,563.0 L371.5,563.2 L371.7,563.5 L371.8,563.7 L372.0,563.9 L372.2,564.2 L372.3,564.4 L372.5,564.7 L372.7,564.9 L372.8,565.1 L373.0,565.4 L373.2,565.6 L373.4,565.8 L373.5,566.1 L373.7,566.3 L373.9,566.5 L374.0,566.8 L374.2,567.0 L374.4,567.2 L374.6,567.4 L374.7,567.7 L374.9,567.9 L375.1,568.1 L375.3,568.4 L375.4,568.6 L375.6,568.8 L375.8,569.0 L375.9,569.3 L376.1,569.5 L376.3,569.7 L376.5,569.9 L376.6,570.1 L376.8,570.4 L377.0,570.6 L377.2,570.8 L377.3,571.0 L377.5,571.2 L377.7,571.5 L377.8,571.7 L378.0,571.9 L378.2,572.1 L378.4,572.3 L378.5,572.5 L378.7,572.7 L378.9,572.9 L379.1,573.1 L379.2,573.3 L379.4,573.6 L379.6,573.8 L379.7,574.0 L379.9,574.2 L380.1,574.4 L380.3,574.6 L380.4,574.8 L380.6,575.0 L380.8,575.2 L380.9,575.4 L381.1,575.5 L381.3,575.7 L381.4,575.9 L381.6,576.1 L381.8,576.3 L381.9,576.5 L382.1,576.7 L382.3,576.9 L382.4,577.1 L382.6,577.2 L382.8,577.4 L382.9,577.6 L383.1,577.8 L383.3,578.0 L383.4,578.1 L383.6,578.3 L383.8,578.5 L383.9,578.7 L384.1,578.8 L384.2,579.0 L384.4,579.2 L384.6,579.3 L384.7,579.5 L384.9,579.7 L385.0,579.8 L385.2,580.0 L385.4,580.2 L385.5,580.3 L385.7,580.5 L385.8,580.6 L386.0,580.8 L386.1,580.9 L386.3,581.1 L386.5,581.2 L386.6,581.4 L386.8,581.5 L386.9,581.7 L387.1,581.8 L387.2,581.9 L387.4,582.1 L387.5,582.2 L387.7,582.4 L387.8,582.5 L388.0,582.6 L388.1,582.8 L388.2,582.9 L388.4,583.0 L388.5,583.1 L388.7,583.3 L388.8,583.4 L389.0,583.5 L389.1,583.6 L389.2,583.7 L389.4,583.8 L389.5,584.0 L389.7,584.1 L389.8,584.2 L389.9,584.3 L390.1,584.4 L390.2,584.5 L390.3,584.6 L390.5,584.7 L390.6,584.8 L390.7,584.9 L390.8,585.0 L391.0,585.1 L391.1,585.2 L391.2,585.2 L391.3,585.3 L391.5,585.4 L391.6,585.5 L391.7,585.6 L391.8,585.7 L392.0,585.7 L392.1,585.8 L392.2,585.9 L392.3,585.9 L392.4,586.0 L392.5,586.1 L392.6,586.1 L392.8,586.2 L392.9,586.3 L393.0,586.3 L393.1,586.4 L393.2,586.4 L393.3,586.5 L393.4,586.5 L393.5,586.6 L393.6,586.6 L393.7,586.7 L393.8,586.7 L393.9,586.7 L394.0,586.8 L394.1,586.8 L394.2,586.8 L394.3,586.9 L394.4,586.9 L394.5,586.9 L394.5,586.9 L394.6,587.0 L394.7,587.0 L394.8,587.0 L394.9,587.0 L395.0,587.0 L395.1,587.0 L395.1,587.0 L395.2,587.0 L395.3,587.0 L395.4,587.0 L395.4,587.0 L395.5,587.0 L395.6,587.0 L395.6,587.0 L395.7,587.0 L395.8,587.0 L395.8,587.0 L395.9,587.0 L396.0,586.9 L396.0,586.9 L396.1,586.9 L396.2,586.9 L396.2,586.8 L396.3,586.8 L396.3,586.8 L396.4,586.7 L415.7,572.4 L415.7,572.4 L416.0,572.6 L416.2,572.9 L416.5,573.1 L416.7,573.3 L417.0,573.5 L417.2,573.8 L417.5,574.0 L417.7,574.2 L418.0,574.4 L418.2,574.6 L418.5,574.8 L418.7,575.0 L419.0,575.2 L419.2,575.4 L419.4,575.6 L419.7,575.8 L419.9,576.0 L420.2,576.2 L420.4,576.4 L420.7,576.6 L420.9,576.8 L421.1,577.0 L421.4,577.2 L421.6,577.3 L421.8,577.5 L422.1,577.7 L422.3,577.8 L422.5,578.0 L422.8,578.2 L423.0,578.3 L423.2,578.5 L423.5,578.7 L423.7,578.8 L423.9,579.0 L424.1,579.1 L424.4,579.3 L424.6,579.4 L424.8,579.5 L425.0,579.7 L425.2,579.8 L425.5,579.9 L425.7,580.1 L425.9,580.2 L426.1,580.3 L426.3,580.4 L426.5,580.5 L426.7,580.7 L426.9,580.8 L427.1,580.9 L427.4,581.0 L427.6,581.1 L427.8,581.2 L428.0,581.3 L428.2,581.4 L428.4,581.5 L428.6,581.6 L428.8,581.6 L428.9,581.7 L429.1,581.8 L429.3,581.9 L429.5,581.9 L429.7,582.0 L429.9,582.1 L430.1,582.1 L430.3,582.2 L430.4,582.3 L430.6,582.3 L430.8,582.4 L431.0,582.4 L431.2,582.4 L431.3,582.5 L431.5,582.5 L431.7,582.6 L431.8,582.6 L432.0,582.6 L432.2,582.6 L432.3,582.6 L432.5,582.7 L432.7,582.7 L432.8,582.7 L433.0,582.7 L433.1,582.7 L433.3,582.7 L433.4,582.7 L433.6,582.7 L433.7,582.7 L433.9,582.7 L434.0,582.6 L434.1,582.6 L434.3,582.6 L434.4,582.6 L434.5,582.5 L434.7,582.5 L434.8,582.5 L434.9,582.4 L435.1,582.4 L435.2,582.3 L435.3,582.3 L435.4,582.2 L435.5,582.2 L435.6,582.1 L435.8,582.0 L435.9,582.0 L436.0,581.9 L436.1,581.8 L543.7,501.1 L543.7,501.1 L544.0,501.2 L544.3,501.2 L544.7,501.3 L545.0,501.3 L545.3,501.4 L545.6,501.4 L545.9,501.4 L546.3,501.5 L546.6,501.5 L546.9,501.5 L547.2,501.5 L547.5,501.6 L547.8,501.6 L548.1,501.6 L548.4,501.6 L548.8,501.6 L549.1,501.6 L549.4,501.6 L549.7,501.6 L550.0,501.6 L550.3,501.5 L550.6,501.5 L550.9,501.5 L551.2,501.5 L551.5,501.4 L551.8,501.4 L552.1,501.4 L552.4,501.3 L552.7,501.3 L552.9,501.2 L553.2,501.2 L553.5,501.1 L553.8,501.1 L554.1,501.0 L554.4,500.9 L554.7,500.9 L554.9,500.8 L555.2,500.7 L555.5,500.6 L555.8,500.6 L556.0,500.5 L556.3,500.4 L556.6,500.3 L556.8,500.2 L557.1,500.1 L557.4,500.0 L557.6,499.9 L557.9,499.7 L558.2,499.6 L558.4,499.5 L558.7,499.4 L558.9,499.2 L559.2,499.1 L559.4,499.0 L559.7,498.8 L559.9,498.7 L560.1,498.5 L560.4,498.4 L560.6,498.2 L560.9,498.1 L561.1,497.9 L561.3,497.7 L561.6,497.6 L561.8,497.4 L579.5,483.4 L579.7,483.2Z" fill="none" stroke="#1c2636" stroke-width="0.9" stroke-linejoin="round"/>
</svg>
</body></html>
